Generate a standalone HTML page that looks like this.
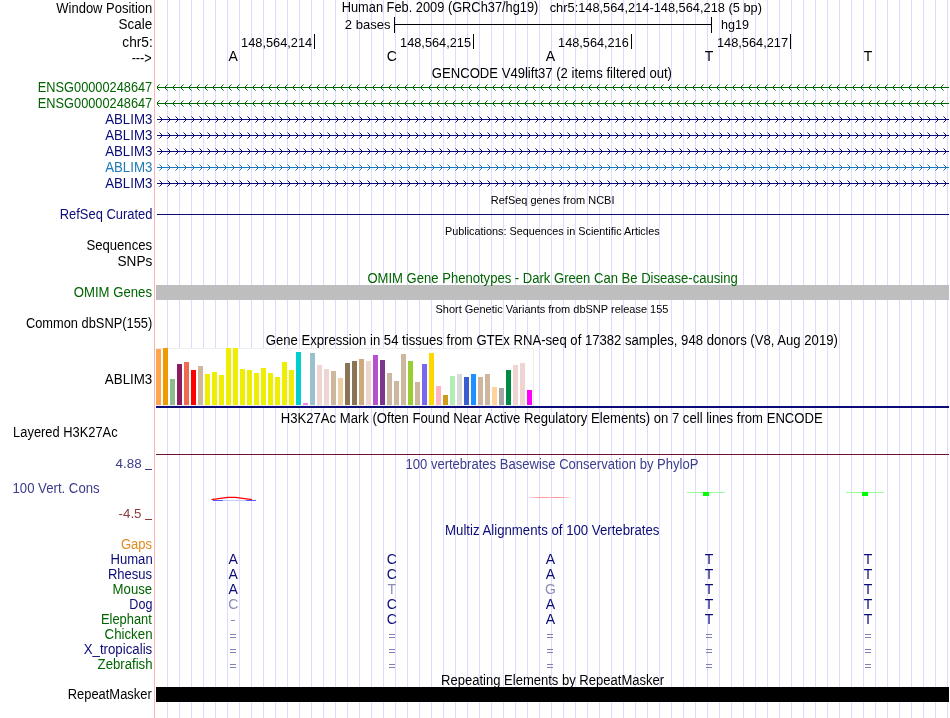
<!DOCTYPE html><html><head><meta charset="utf-8"><style>html,body{margin:0;padding:0;background:#fff;width:950px;height:718px;overflow:hidden}</style></head><body><svg width="950" height="718" viewBox="0 0 950 718" font-family="&quot;Liberation Sans&quot;, sans-serif" style="display:block;will-change:transform">
<defs>
<linearGradient id="lr" x1="0" x2="1" y1="0" y2="0"><stop offset="0" stop-color="#ffeaea"/><stop offset="0.2" stop-color="#ffa0a0"/><stop offset="0.4" stop-color="#ff9898"/><stop offset="0.5" stop-color="#ffb0b0"/><stop offset="0.65" stop-color="#ff9090"/><stop offset="0.8" stop-color="#ffa0a0"/><stop offset="1" stop-color="#ffeeee"/></linearGradient>
</defs>
<rect width="950" height="718" fill="#fff"/>
<path d="M167.5 0V718M179.5 0V718M191.5 0V718M203.5 0V718M215.5 0V718M227.5 0V718M239.5 0V718M251.5 0V718M263.5 0V718M275.5 0V718M287.5 0V718M299.5 0V718M311.5 0V718M323.5 0V718M335.5 0V718M347.5 0V718M359.5 0V718M371.5 0V718M383.5 0V718M395.5 0V718M407.5 0V718M419.5 0V718M431.5 0V718M443.5 0V718M455.5 0V718M467.5 0V718M479.5 0V718M491.5 0V718M503.5 0V718M515.5 0V718M527.5 0V718M539.5 0V718M551.5 0V718M563.5 0V718M575.5 0V718M587.5 0V718M599.5 0V718M611.5 0V718M623.5 0V718M635.5 0V718M647.5 0V718M659.5 0V718M671.5 0V718M683.5 0V718M695.5 0V718M707.5 0V718M719.5 0V718M731.5 0V718M743.5 0V718M755.5 0V718M767.5 0V718M779.5 0V718M791.5 0V718M803.5 0V718M815.5 0V718M827.5 0V718M839.5 0V718M851.5 0V718M863.5 0V718M875.5 0V718M887.5 0V718M899.5 0V718M911.5 0V718M923.5 0V718M935.5 0V718M947.5 0V718" stroke="#dcdcff" stroke-width="1" fill="none"/>
<path d="M154.5 0V718" stroke="#ffb4b4" stroke-width="1"/>
<g fill="#000" shape-rendering="crispEdges">
<rect x="394" y="17" width="1" height="16"/><rect x="711" y="17" width="1" height="16"/><rect x="394" y="24" width="318" height="1"/>
<rect x="314" y="34" width="1" height="15"/>
<rect x="473" y="34" width="1" height="15"/>
<rect x="631" y="34" width="1" height="15"/>
<rect x="790" y="34" width="1" height="15"/>
</g>
<g shape-rendering="crispEdges">
<rect x="157" y="87" width="792" height="1" fill="#006400"/><path d="M157 86h1v3h-1zM158 85h1v1h-1zM158 89h1v1h-1z" fill="#006400"/><path d="M159 84h1v1h-1zM159 90h1v1h-1z" fill="#006400" fill-opacity="0.55"/><path d="M165 86h1v3h-1zM166 85h1v1h-1zM166 89h1v1h-1z" fill="#006400"/><path d="M167 84h1v1h-1zM167 90h1v1h-1z" fill="#006400" fill-opacity="0.55"/><path d="M173 86h1v3h-1zM174 85h1v1h-1zM174 89h1v1h-1z" fill="#006400"/><path d="M175 84h1v1h-1zM175 90h1v1h-1z" fill="#006400" fill-opacity="0.55"/><path d="M181 86h1v3h-1zM182 85h1v1h-1zM182 89h1v1h-1z" fill="#006400"/><path d="M183 84h1v1h-1zM183 90h1v1h-1z" fill="#006400" fill-opacity="0.55"/><path d="M189 86h1v3h-1zM190 85h1v1h-1zM190 89h1v1h-1z" fill="#006400"/><path d="M191 84h1v1h-1zM191 90h1v1h-1z" fill="#006400" fill-opacity="0.55"/><path d="M197 86h1v3h-1zM198 85h1v1h-1zM198 89h1v1h-1z" fill="#006400"/><path d="M199 84h1v1h-1zM199 90h1v1h-1z" fill="#006400" fill-opacity="0.55"/><path d="M205 86h1v3h-1zM206 85h1v1h-1zM206 89h1v1h-1z" fill="#006400"/><path d="M207 84h1v1h-1zM207 90h1v1h-1z" fill="#006400" fill-opacity="0.55"/><path d="M213 86h1v3h-1zM214 85h1v1h-1zM214 89h1v1h-1z" fill="#006400"/><path d="M215 84h1v1h-1zM215 90h1v1h-1z" fill="#006400" fill-opacity="0.55"/><path d="M221 86h1v3h-1zM222 85h1v1h-1zM222 89h1v1h-1z" fill="#006400"/><path d="M223 84h1v1h-1zM223 90h1v1h-1z" fill="#006400" fill-opacity="0.55"/><path d="M229 86h1v3h-1zM230 85h1v1h-1zM230 89h1v1h-1z" fill="#006400"/><path d="M231 84h1v1h-1zM231 90h1v1h-1z" fill="#006400" fill-opacity="0.55"/><path d="M237 86h1v3h-1zM238 85h1v1h-1zM238 89h1v1h-1z" fill="#006400"/><path d="M239 84h1v1h-1zM239 90h1v1h-1z" fill="#006400" fill-opacity="0.55"/><path d="M245 86h1v3h-1zM246 85h1v1h-1zM246 89h1v1h-1z" fill="#006400"/><path d="M247 84h1v1h-1zM247 90h1v1h-1z" fill="#006400" fill-opacity="0.55"/><path d="M253 86h1v3h-1zM254 85h1v1h-1zM254 89h1v1h-1z" fill="#006400"/><path d="M255 84h1v1h-1zM255 90h1v1h-1z" fill="#006400" fill-opacity="0.55"/><path d="M261 86h1v3h-1zM262 85h1v1h-1zM262 89h1v1h-1z" fill="#006400"/><path d="M263 84h1v1h-1zM263 90h1v1h-1z" fill="#006400" fill-opacity="0.55"/><path d="M269 86h1v3h-1zM270 85h1v1h-1zM270 89h1v1h-1z" fill="#006400"/><path d="M271 84h1v1h-1zM271 90h1v1h-1z" fill="#006400" fill-opacity="0.55"/><path d="M277 86h1v3h-1zM278 85h1v1h-1zM278 89h1v1h-1z" fill="#006400"/><path d="M279 84h1v1h-1zM279 90h1v1h-1z" fill="#006400" fill-opacity="0.55"/><path d="M285 86h1v3h-1zM286 85h1v1h-1zM286 89h1v1h-1z" fill="#006400"/><path d="M287 84h1v1h-1zM287 90h1v1h-1z" fill="#006400" fill-opacity="0.55"/><path d="M293 86h1v3h-1zM294 85h1v1h-1zM294 89h1v1h-1z" fill="#006400"/><path d="M295 84h1v1h-1zM295 90h1v1h-1z" fill="#006400" fill-opacity="0.55"/><path d="M301 86h1v3h-1zM302 85h1v1h-1zM302 89h1v1h-1z" fill="#006400"/><path d="M303 84h1v1h-1zM303 90h1v1h-1z" fill="#006400" fill-opacity="0.55"/><path d="M309 86h1v3h-1zM310 85h1v1h-1zM310 89h1v1h-1z" fill="#006400"/><path d="M311 84h1v1h-1zM311 90h1v1h-1z" fill="#006400" fill-opacity="0.55"/><path d="M317 86h1v3h-1zM318 85h1v1h-1zM318 89h1v1h-1z" fill="#006400"/><path d="M319 84h1v1h-1zM319 90h1v1h-1z" fill="#006400" fill-opacity="0.55"/><path d="M325 86h1v3h-1zM326 85h1v1h-1zM326 89h1v1h-1z" fill="#006400"/><path d="M327 84h1v1h-1zM327 90h1v1h-1z" fill="#006400" fill-opacity="0.55"/><path d="M333 86h1v3h-1zM334 85h1v1h-1zM334 89h1v1h-1z" fill="#006400"/><path d="M335 84h1v1h-1zM335 90h1v1h-1z" fill="#006400" fill-opacity="0.55"/><path d="M341 86h1v3h-1zM342 85h1v1h-1zM342 89h1v1h-1z" fill="#006400"/><path d="M343 84h1v1h-1zM343 90h1v1h-1z" fill="#006400" fill-opacity="0.55"/><path d="M349 86h1v3h-1zM350 85h1v1h-1zM350 89h1v1h-1z" fill="#006400"/><path d="M351 84h1v1h-1zM351 90h1v1h-1z" fill="#006400" fill-opacity="0.55"/><path d="M357 86h1v3h-1zM358 85h1v1h-1zM358 89h1v1h-1z" fill="#006400"/><path d="M359 84h1v1h-1zM359 90h1v1h-1z" fill="#006400" fill-opacity="0.55"/><path d="M365 86h1v3h-1zM366 85h1v1h-1zM366 89h1v1h-1z" fill="#006400"/><path d="M367 84h1v1h-1zM367 90h1v1h-1z" fill="#006400" fill-opacity="0.55"/><path d="M373 86h1v3h-1zM374 85h1v1h-1zM374 89h1v1h-1z" fill="#006400"/><path d="M375 84h1v1h-1zM375 90h1v1h-1z" fill="#006400" fill-opacity="0.55"/><path d="M381 86h1v3h-1zM382 85h1v1h-1zM382 89h1v1h-1z" fill="#006400"/><path d="M383 84h1v1h-1zM383 90h1v1h-1z" fill="#006400" fill-opacity="0.55"/><path d="M389 86h1v3h-1zM390 85h1v1h-1zM390 89h1v1h-1z" fill="#006400"/><path d="M391 84h1v1h-1zM391 90h1v1h-1z" fill="#006400" fill-opacity="0.55"/><path d="M397 86h1v3h-1zM398 85h1v1h-1zM398 89h1v1h-1z" fill="#006400"/><path d="M399 84h1v1h-1zM399 90h1v1h-1z" fill="#006400" fill-opacity="0.55"/><path d="M405 86h1v3h-1zM406 85h1v1h-1zM406 89h1v1h-1z" fill="#006400"/><path d="M407 84h1v1h-1zM407 90h1v1h-1z" fill="#006400" fill-opacity="0.55"/><path d="M413 86h1v3h-1zM414 85h1v1h-1zM414 89h1v1h-1z" fill="#006400"/><path d="M415 84h1v1h-1zM415 90h1v1h-1z" fill="#006400" fill-opacity="0.55"/><path d="M421 86h1v3h-1zM422 85h1v1h-1zM422 89h1v1h-1z" fill="#006400"/><path d="M423 84h1v1h-1zM423 90h1v1h-1z" fill="#006400" fill-opacity="0.55"/><path d="M429 86h1v3h-1zM430 85h1v1h-1zM430 89h1v1h-1z" fill="#006400"/><path d="M431 84h1v1h-1zM431 90h1v1h-1z" fill="#006400" fill-opacity="0.55"/><path d="M437 86h1v3h-1zM438 85h1v1h-1zM438 89h1v1h-1z" fill="#006400"/><path d="M439 84h1v1h-1zM439 90h1v1h-1z" fill="#006400" fill-opacity="0.55"/><path d="M445 86h1v3h-1zM446 85h1v1h-1zM446 89h1v1h-1z" fill="#006400"/><path d="M447 84h1v1h-1zM447 90h1v1h-1z" fill="#006400" fill-opacity="0.55"/><path d="M453 86h1v3h-1zM454 85h1v1h-1zM454 89h1v1h-1z" fill="#006400"/><path d="M455 84h1v1h-1zM455 90h1v1h-1z" fill="#006400" fill-opacity="0.55"/><path d="M461 86h1v3h-1zM462 85h1v1h-1zM462 89h1v1h-1z" fill="#006400"/><path d="M463 84h1v1h-1zM463 90h1v1h-1z" fill="#006400" fill-opacity="0.55"/><path d="M469 86h1v3h-1zM470 85h1v1h-1zM470 89h1v1h-1z" fill="#006400"/><path d="M471 84h1v1h-1zM471 90h1v1h-1z" fill="#006400" fill-opacity="0.55"/><path d="M477 86h1v3h-1zM478 85h1v1h-1zM478 89h1v1h-1z" fill="#006400"/><path d="M479 84h1v1h-1zM479 90h1v1h-1z" fill="#006400" fill-opacity="0.55"/><path d="M485 86h1v3h-1zM486 85h1v1h-1zM486 89h1v1h-1z" fill="#006400"/><path d="M487 84h1v1h-1zM487 90h1v1h-1z" fill="#006400" fill-opacity="0.55"/><path d="M493 86h1v3h-1zM494 85h1v1h-1zM494 89h1v1h-1z" fill="#006400"/><path d="M495 84h1v1h-1zM495 90h1v1h-1z" fill="#006400" fill-opacity="0.55"/><path d="M501 86h1v3h-1zM502 85h1v1h-1zM502 89h1v1h-1z" fill="#006400"/><path d="M503 84h1v1h-1zM503 90h1v1h-1z" fill="#006400" fill-opacity="0.55"/><path d="M509 86h1v3h-1zM510 85h1v1h-1zM510 89h1v1h-1z" fill="#006400"/><path d="M511 84h1v1h-1zM511 90h1v1h-1z" fill="#006400" fill-opacity="0.55"/><path d="M517 86h1v3h-1zM518 85h1v1h-1zM518 89h1v1h-1z" fill="#006400"/><path d="M519 84h1v1h-1zM519 90h1v1h-1z" fill="#006400" fill-opacity="0.55"/><path d="M525 86h1v3h-1zM526 85h1v1h-1zM526 89h1v1h-1z" fill="#006400"/><path d="M527 84h1v1h-1zM527 90h1v1h-1z" fill="#006400" fill-opacity="0.55"/><path d="M533 86h1v3h-1zM534 85h1v1h-1zM534 89h1v1h-1z" fill="#006400"/><path d="M535 84h1v1h-1zM535 90h1v1h-1z" fill="#006400" fill-opacity="0.55"/><path d="M541 86h1v3h-1zM542 85h1v1h-1zM542 89h1v1h-1z" fill="#006400"/><path d="M543 84h1v1h-1zM543 90h1v1h-1z" fill="#006400" fill-opacity="0.55"/><path d="M549 86h1v3h-1zM550 85h1v1h-1zM550 89h1v1h-1z" fill="#006400"/><path d="M551 84h1v1h-1zM551 90h1v1h-1z" fill="#006400" fill-opacity="0.55"/><path d="M557 86h1v3h-1zM558 85h1v1h-1zM558 89h1v1h-1z" fill="#006400"/><path d="M559 84h1v1h-1zM559 90h1v1h-1z" fill="#006400" fill-opacity="0.55"/><path d="M565 86h1v3h-1zM566 85h1v1h-1zM566 89h1v1h-1z" fill="#006400"/><path d="M567 84h1v1h-1zM567 90h1v1h-1z" fill="#006400" fill-opacity="0.55"/><path d="M573 86h1v3h-1zM574 85h1v1h-1zM574 89h1v1h-1z" fill="#006400"/><path d="M575 84h1v1h-1zM575 90h1v1h-1z" fill="#006400" fill-opacity="0.55"/><path d="M581 86h1v3h-1zM582 85h1v1h-1zM582 89h1v1h-1z" fill="#006400"/><path d="M583 84h1v1h-1zM583 90h1v1h-1z" fill="#006400" fill-opacity="0.55"/><path d="M589 86h1v3h-1zM590 85h1v1h-1zM590 89h1v1h-1z" fill="#006400"/><path d="M591 84h1v1h-1zM591 90h1v1h-1z" fill="#006400" fill-opacity="0.55"/><path d="M597 86h1v3h-1zM598 85h1v1h-1zM598 89h1v1h-1z" fill="#006400"/><path d="M599 84h1v1h-1zM599 90h1v1h-1z" fill="#006400" fill-opacity="0.55"/><path d="M605 86h1v3h-1zM606 85h1v1h-1zM606 89h1v1h-1z" fill="#006400"/><path d="M607 84h1v1h-1zM607 90h1v1h-1z" fill="#006400" fill-opacity="0.55"/><path d="M613 86h1v3h-1zM614 85h1v1h-1zM614 89h1v1h-1z" fill="#006400"/><path d="M615 84h1v1h-1zM615 90h1v1h-1z" fill="#006400" fill-opacity="0.55"/><path d="M621 86h1v3h-1zM622 85h1v1h-1zM622 89h1v1h-1z" fill="#006400"/><path d="M623 84h1v1h-1zM623 90h1v1h-1z" fill="#006400" fill-opacity="0.55"/><path d="M629 86h1v3h-1zM630 85h1v1h-1zM630 89h1v1h-1z" fill="#006400"/><path d="M631 84h1v1h-1zM631 90h1v1h-1z" fill="#006400" fill-opacity="0.55"/><path d="M637 86h1v3h-1zM638 85h1v1h-1zM638 89h1v1h-1z" fill="#006400"/><path d="M639 84h1v1h-1zM639 90h1v1h-1z" fill="#006400" fill-opacity="0.55"/><path d="M645 86h1v3h-1zM646 85h1v1h-1zM646 89h1v1h-1z" fill="#006400"/><path d="M647 84h1v1h-1zM647 90h1v1h-1z" fill="#006400" fill-opacity="0.55"/><path d="M653 86h1v3h-1zM654 85h1v1h-1zM654 89h1v1h-1z" fill="#006400"/><path d="M655 84h1v1h-1zM655 90h1v1h-1z" fill="#006400" fill-opacity="0.55"/><path d="M661 86h1v3h-1zM662 85h1v1h-1zM662 89h1v1h-1z" fill="#006400"/><path d="M663 84h1v1h-1zM663 90h1v1h-1z" fill="#006400" fill-opacity="0.55"/><path d="M669 86h1v3h-1zM670 85h1v1h-1zM670 89h1v1h-1z" fill="#006400"/><path d="M671 84h1v1h-1zM671 90h1v1h-1z" fill="#006400" fill-opacity="0.55"/><path d="M677 86h1v3h-1zM678 85h1v1h-1zM678 89h1v1h-1z" fill="#006400"/><path d="M679 84h1v1h-1zM679 90h1v1h-1z" fill="#006400" fill-opacity="0.55"/><path d="M685 86h1v3h-1zM686 85h1v1h-1zM686 89h1v1h-1z" fill="#006400"/><path d="M687 84h1v1h-1zM687 90h1v1h-1z" fill="#006400" fill-opacity="0.55"/><path d="M693 86h1v3h-1zM694 85h1v1h-1zM694 89h1v1h-1z" fill="#006400"/><path d="M695 84h1v1h-1zM695 90h1v1h-1z" fill="#006400" fill-opacity="0.55"/><path d="M701 86h1v3h-1zM702 85h1v1h-1zM702 89h1v1h-1z" fill="#006400"/><path d="M703 84h1v1h-1zM703 90h1v1h-1z" fill="#006400" fill-opacity="0.55"/><path d="M709 86h1v3h-1zM710 85h1v1h-1zM710 89h1v1h-1z" fill="#006400"/><path d="M711 84h1v1h-1zM711 90h1v1h-1z" fill="#006400" fill-opacity="0.55"/><path d="M717 86h1v3h-1zM718 85h1v1h-1zM718 89h1v1h-1z" fill="#006400"/><path d="M719 84h1v1h-1zM719 90h1v1h-1z" fill="#006400" fill-opacity="0.55"/><path d="M725 86h1v3h-1zM726 85h1v1h-1zM726 89h1v1h-1z" fill="#006400"/><path d="M727 84h1v1h-1zM727 90h1v1h-1z" fill="#006400" fill-opacity="0.55"/><path d="M733 86h1v3h-1zM734 85h1v1h-1zM734 89h1v1h-1z" fill="#006400"/><path d="M735 84h1v1h-1zM735 90h1v1h-1z" fill="#006400" fill-opacity="0.55"/><path d="M741 86h1v3h-1zM742 85h1v1h-1zM742 89h1v1h-1z" fill="#006400"/><path d="M743 84h1v1h-1zM743 90h1v1h-1z" fill="#006400" fill-opacity="0.55"/><path d="M749 86h1v3h-1zM750 85h1v1h-1zM750 89h1v1h-1z" fill="#006400"/><path d="M751 84h1v1h-1zM751 90h1v1h-1z" fill="#006400" fill-opacity="0.55"/><path d="M757 86h1v3h-1zM758 85h1v1h-1zM758 89h1v1h-1z" fill="#006400"/><path d="M759 84h1v1h-1zM759 90h1v1h-1z" fill="#006400" fill-opacity="0.55"/><path d="M765 86h1v3h-1zM766 85h1v1h-1zM766 89h1v1h-1z" fill="#006400"/><path d="M767 84h1v1h-1zM767 90h1v1h-1z" fill="#006400" fill-opacity="0.55"/><path d="M773 86h1v3h-1zM774 85h1v1h-1zM774 89h1v1h-1z" fill="#006400"/><path d="M775 84h1v1h-1zM775 90h1v1h-1z" fill="#006400" fill-opacity="0.55"/><path d="M781 86h1v3h-1zM782 85h1v1h-1zM782 89h1v1h-1z" fill="#006400"/><path d="M783 84h1v1h-1zM783 90h1v1h-1z" fill="#006400" fill-opacity="0.55"/><path d="M789 86h1v3h-1zM790 85h1v1h-1zM790 89h1v1h-1z" fill="#006400"/><path d="M791 84h1v1h-1zM791 90h1v1h-1z" fill="#006400" fill-opacity="0.55"/><path d="M797 86h1v3h-1zM798 85h1v1h-1zM798 89h1v1h-1z" fill="#006400"/><path d="M799 84h1v1h-1zM799 90h1v1h-1z" fill="#006400" fill-opacity="0.55"/><path d="M805 86h1v3h-1zM806 85h1v1h-1zM806 89h1v1h-1z" fill="#006400"/><path d="M807 84h1v1h-1zM807 90h1v1h-1z" fill="#006400" fill-opacity="0.55"/><path d="M813 86h1v3h-1zM814 85h1v1h-1zM814 89h1v1h-1z" fill="#006400"/><path d="M815 84h1v1h-1zM815 90h1v1h-1z" fill="#006400" fill-opacity="0.55"/><path d="M821 86h1v3h-1zM822 85h1v1h-1zM822 89h1v1h-1z" fill="#006400"/><path d="M823 84h1v1h-1zM823 90h1v1h-1z" fill="#006400" fill-opacity="0.55"/><path d="M829 86h1v3h-1zM830 85h1v1h-1zM830 89h1v1h-1z" fill="#006400"/><path d="M831 84h1v1h-1zM831 90h1v1h-1z" fill="#006400" fill-opacity="0.55"/><path d="M837 86h1v3h-1zM838 85h1v1h-1zM838 89h1v1h-1z" fill="#006400"/><path d="M839 84h1v1h-1zM839 90h1v1h-1z" fill="#006400" fill-opacity="0.55"/><path d="M845 86h1v3h-1zM846 85h1v1h-1zM846 89h1v1h-1z" fill="#006400"/><path d="M847 84h1v1h-1zM847 90h1v1h-1z" fill="#006400" fill-opacity="0.55"/><path d="M853 86h1v3h-1zM854 85h1v1h-1zM854 89h1v1h-1z" fill="#006400"/><path d="M855 84h1v1h-1zM855 90h1v1h-1z" fill="#006400" fill-opacity="0.55"/><path d="M861 86h1v3h-1zM862 85h1v1h-1zM862 89h1v1h-1z" fill="#006400"/><path d="M863 84h1v1h-1zM863 90h1v1h-1z" fill="#006400" fill-opacity="0.55"/><path d="M869 86h1v3h-1zM870 85h1v1h-1zM870 89h1v1h-1z" fill="#006400"/><path d="M871 84h1v1h-1zM871 90h1v1h-1z" fill="#006400" fill-opacity="0.55"/><path d="M877 86h1v3h-1zM878 85h1v1h-1zM878 89h1v1h-1z" fill="#006400"/><path d="M879 84h1v1h-1zM879 90h1v1h-1z" fill="#006400" fill-opacity="0.55"/><path d="M885 86h1v3h-1zM886 85h1v1h-1zM886 89h1v1h-1z" fill="#006400"/><path d="M887 84h1v1h-1zM887 90h1v1h-1z" fill="#006400" fill-opacity="0.55"/><path d="M893 86h1v3h-1zM894 85h1v1h-1zM894 89h1v1h-1z" fill="#006400"/><path d="M895 84h1v1h-1zM895 90h1v1h-1z" fill="#006400" fill-opacity="0.55"/><path d="M901 86h1v3h-1zM902 85h1v1h-1zM902 89h1v1h-1z" fill="#006400"/><path d="M903 84h1v1h-1zM903 90h1v1h-1z" fill="#006400" fill-opacity="0.55"/><path d="M909 86h1v3h-1zM910 85h1v1h-1zM910 89h1v1h-1z" fill="#006400"/><path d="M911 84h1v1h-1zM911 90h1v1h-1z" fill="#006400" fill-opacity="0.55"/><path d="M917 86h1v3h-1zM918 85h1v1h-1zM918 89h1v1h-1z" fill="#006400"/><path d="M919 84h1v1h-1zM919 90h1v1h-1z" fill="#006400" fill-opacity="0.55"/><path d="M925 86h1v3h-1zM926 85h1v1h-1zM926 89h1v1h-1z" fill="#006400"/><path d="M927 84h1v1h-1zM927 90h1v1h-1z" fill="#006400" fill-opacity="0.55"/><path d="M933 86h1v3h-1zM934 85h1v1h-1zM934 89h1v1h-1z" fill="#006400"/><path d="M935 84h1v1h-1zM935 90h1v1h-1z" fill="#006400" fill-opacity="0.55"/><path d="M941 86h1v3h-1zM942 85h1v1h-1zM942 89h1v1h-1z" fill="#006400"/><path d="M943 84h1v1h-1zM943 90h1v1h-1z" fill="#006400" fill-opacity="0.55"/>
<rect x="157" y="103" width="792" height="1" fill="#006400"/><path d="M157 102h1v3h-1zM158 101h1v1h-1zM158 105h1v1h-1z" fill="#006400"/><path d="M159 100h1v1h-1zM159 106h1v1h-1z" fill="#006400" fill-opacity="0.55"/><path d="M165 102h1v3h-1zM166 101h1v1h-1zM166 105h1v1h-1z" fill="#006400"/><path d="M167 100h1v1h-1zM167 106h1v1h-1z" fill="#006400" fill-opacity="0.55"/><path d="M173 102h1v3h-1zM174 101h1v1h-1zM174 105h1v1h-1z" fill="#006400"/><path d="M175 100h1v1h-1zM175 106h1v1h-1z" fill="#006400" fill-opacity="0.55"/><path d="M181 102h1v3h-1zM182 101h1v1h-1zM182 105h1v1h-1z" fill="#006400"/><path d="M183 100h1v1h-1zM183 106h1v1h-1z" fill="#006400" fill-opacity="0.55"/><path d="M189 102h1v3h-1zM190 101h1v1h-1zM190 105h1v1h-1z" fill="#006400"/><path d="M191 100h1v1h-1zM191 106h1v1h-1z" fill="#006400" fill-opacity="0.55"/><path d="M197 102h1v3h-1zM198 101h1v1h-1zM198 105h1v1h-1z" fill="#006400"/><path d="M199 100h1v1h-1zM199 106h1v1h-1z" fill="#006400" fill-opacity="0.55"/><path d="M205 102h1v3h-1zM206 101h1v1h-1zM206 105h1v1h-1z" fill="#006400"/><path d="M207 100h1v1h-1zM207 106h1v1h-1z" fill="#006400" fill-opacity="0.55"/><path d="M213 102h1v3h-1zM214 101h1v1h-1zM214 105h1v1h-1z" fill="#006400"/><path d="M215 100h1v1h-1zM215 106h1v1h-1z" fill="#006400" fill-opacity="0.55"/><path d="M221 102h1v3h-1zM222 101h1v1h-1zM222 105h1v1h-1z" fill="#006400"/><path d="M223 100h1v1h-1zM223 106h1v1h-1z" fill="#006400" fill-opacity="0.55"/><path d="M229 102h1v3h-1zM230 101h1v1h-1zM230 105h1v1h-1z" fill="#006400"/><path d="M231 100h1v1h-1zM231 106h1v1h-1z" fill="#006400" fill-opacity="0.55"/><path d="M237 102h1v3h-1zM238 101h1v1h-1zM238 105h1v1h-1z" fill="#006400"/><path d="M239 100h1v1h-1zM239 106h1v1h-1z" fill="#006400" fill-opacity="0.55"/><path d="M245 102h1v3h-1zM246 101h1v1h-1zM246 105h1v1h-1z" fill="#006400"/><path d="M247 100h1v1h-1zM247 106h1v1h-1z" fill="#006400" fill-opacity="0.55"/><path d="M253 102h1v3h-1zM254 101h1v1h-1zM254 105h1v1h-1z" fill="#006400"/><path d="M255 100h1v1h-1zM255 106h1v1h-1z" fill="#006400" fill-opacity="0.55"/><path d="M261 102h1v3h-1zM262 101h1v1h-1zM262 105h1v1h-1z" fill="#006400"/><path d="M263 100h1v1h-1zM263 106h1v1h-1z" fill="#006400" fill-opacity="0.55"/><path d="M269 102h1v3h-1zM270 101h1v1h-1zM270 105h1v1h-1z" fill="#006400"/><path d="M271 100h1v1h-1zM271 106h1v1h-1z" fill="#006400" fill-opacity="0.55"/><path d="M277 102h1v3h-1zM278 101h1v1h-1zM278 105h1v1h-1z" fill="#006400"/><path d="M279 100h1v1h-1zM279 106h1v1h-1z" fill="#006400" fill-opacity="0.55"/><path d="M285 102h1v3h-1zM286 101h1v1h-1zM286 105h1v1h-1z" fill="#006400"/><path d="M287 100h1v1h-1zM287 106h1v1h-1z" fill="#006400" fill-opacity="0.55"/><path d="M293 102h1v3h-1zM294 101h1v1h-1zM294 105h1v1h-1z" fill="#006400"/><path d="M295 100h1v1h-1zM295 106h1v1h-1z" fill="#006400" fill-opacity="0.55"/><path d="M301 102h1v3h-1zM302 101h1v1h-1zM302 105h1v1h-1z" fill="#006400"/><path d="M303 100h1v1h-1zM303 106h1v1h-1z" fill="#006400" fill-opacity="0.55"/><path d="M309 102h1v3h-1zM310 101h1v1h-1zM310 105h1v1h-1z" fill="#006400"/><path d="M311 100h1v1h-1zM311 106h1v1h-1z" fill="#006400" fill-opacity="0.55"/><path d="M317 102h1v3h-1zM318 101h1v1h-1zM318 105h1v1h-1z" fill="#006400"/><path d="M319 100h1v1h-1zM319 106h1v1h-1z" fill="#006400" fill-opacity="0.55"/><path d="M325 102h1v3h-1zM326 101h1v1h-1zM326 105h1v1h-1z" fill="#006400"/><path d="M327 100h1v1h-1zM327 106h1v1h-1z" fill="#006400" fill-opacity="0.55"/><path d="M333 102h1v3h-1zM334 101h1v1h-1zM334 105h1v1h-1z" fill="#006400"/><path d="M335 100h1v1h-1zM335 106h1v1h-1z" fill="#006400" fill-opacity="0.55"/><path d="M341 102h1v3h-1zM342 101h1v1h-1zM342 105h1v1h-1z" fill="#006400"/><path d="M343 100h1v1h-1zM343 106h1v1h-1z" fill="#006400" fill-opacity="0.55"/><path d="M349 102h1v3h-1zM350 101h1v1h-1zM350 105h1v1h-1z" fill="#006400"/><path d="M351 100h1v1h-1zM351 106h1v1h-1z" fill="#006400" fill-opacity="0.55"/><path d="M357 102h1v3h-1zM358 101h1v1h-1zM358 105h1v1h-1z" fill="#006400"/><path d="M359 100h1v1h-1zM359 106h1v1h-1z" fill="#006400" fill-opacity="0.55"/><path d="M365 102h1v3h-1zM366 101h1v1h-1zM366 105h1v1h-1z" fill="#006400"/><path d="M367 100h1v1h-1zM367 106h1v1h-1z" fill="#006400" fill-opacity="0.55"/><path d="M373 102h1v3h-1zM374 101h1v1h-1zM374 105h1v1h-1z" fill="#006400"/><path d="M375 100h1v1h-1zM375 106h1v1h-1z" fill="#006400" fill-opacity="0.55"/><path d="M381 102h1v3h-1zM382 101h1v1h-1zM382 105h1v1h-1z" fill="#006400"/><path d="M383 100h1v1h-1zM383 106h1v1h-1z" fill="#006400" fill-opacity="0.55"/><path d="M389 102h1v3h-1zM390 101h1v1h-1zM390 105h1v1h-1z" fill="#006400"/><path d="M391 100h1v1h-1zM391 106h1v1h-1z" fill="#006400" fill-opacity="0.55"/><path d="M397 102h1v3h-1zM398 101h1v1h-1zM398 105h1v1h-1z" fill="#006400"/><path d="M399 100h1v1h-1zM399 106h1v1h-1z" fill="#006400" fill-opacity="0.55"/><path d="M405 102h1v3h-1zM406 101h1v1h-1zM406 105h1v1h-1z" fill="#006400"/><path d="M407 100h1v1h-1zM407 106h1v1h-1z" fill="#006400" fill-opacity="0.55"/><path d="M413 102h1v3h-1zM414 101h1v1h-1zM414 105h1v1h-1z" fill="#006400"/><path d="M415 100h1v1h-1zM415 106h1v1h-1z" fill="#006400" fill-opacity="0.55"/><path d="M421 102h1v3h-1zM422 101h1v1h-1zM422 105h1v1h-1z" fill="#006400"/><path d="M423 100h1v1h-1zM423 106h1v1h-1z" fill="#006400" fill-opacity="0.55"/><path d="M429 102h1v3h-1zM430 101h1v1h-1zM430 105h1v1h-1z" fill="#006400"/><path d="M431 100h1v1h-1zM431 106h1v1h-1z" fill="#006400" fill-opacity="0.55"/><path d="M437 102h1v3h-1zM438 101h1v1h-1zM438 105h1v1h-1z" fill="#006400"/><path d="M439 100h1v1h-1zM439 106h1v1h-1z" fill="#006400" fill-opacity="0.55"/><path d="M445 102h1v3h-1zM446 101h1v1h-1zM446 105h1v1h-1z" fill="#006400"/><path d="M447 100h1v1h-1zM447 106h1v1h-1z" fill="#006400" fill-opacity="0.55"/><path d="M453 102h1v3h-1zM454 101h1v1h-1zM454 105h1v1h-1z" fill="#006400"/><path d="M455 100h1v1h-1zM455 106h1v1h-1z" fill="#006400" fill-opacity="0.55"/><path d="M461 102h1v3h-1zM462 101h1v1h-1zM462 105h1v1h-1z" fill="#006400"/><path d="M463 100h1v1h-1zM463 106h1v1h-1z" fill="#006400" fill-opacity="0.55"/><path d="M469 102h1v3h-1zM470 101h1v1h-1zM470 105h1v1h-1z" fill="#006400"/><path d="M471 100h1v1h-1zM471 106h1v1h-1z" fill="#006400" fill-opacity="0.55"/><path d="M477 102h1v3h-1zM478 101h1v1h-1zM478 105h1v1h-1z" fill="#006400"/><path d="M479 100h1v1h-1zM479 106h1v1h-1z" fill="#006400" fill-opacity="0.55"/><path d="M485 102h1v3h-1zM486 101h1v1h-1zM486 105h1v1h-1z" fill="#006400"/><path d="M487 100h1v1h-1zM487 106h1v1h-1z" fill="#006400" fill-opacity="0.55"/><path d="M493 102h1v3h-1zM494 101h1v1h-1zM494 105h1v1h-1z" fill="#006400"/><path d="M495 100h1v1h-1zM495 106h1v1h-1z" fill="#006400" fill-opacity="0.55"/><path d="M501 102h1v3h-1zM502 101h1v1h-1zM502 105h1v1h-1z" fill="#006400"/><path d="M503 100h1v1h-1zM503 106h1v1h-1z" fill="#006400" fill-opacity="0.55"/><path d="M509 102h1v3h-1zM510 101h1v1h-1zM510 105h1v1h-1z" fill="#006400"/><path d="M511 100h1v1h-1zM511 106h1v1h-1z" fill="#006400" fill-opacity="0.55"/><path d="M517 102h1v3h-1zM518 101h1v1h-1zM518 105h1v1h-1z" fill="#006400"/><path d="M519 100h1v1h-1zM519 106h1v1h-1z" fill="#006400" fill-opacity="0.55"/><path d="M525 102h1v3h-1zM526 101h1v1h-1zM526 105h1v1h-1z" fill="#006400"/><path d="M527 100h1v1h-1zM527 106h1v1h-1z" fill="#006400" fill-opacity="0.55"/><path d="M533 102h1v3h-1zM534 101h1v1h-1zM534 105h1v1h-1z" fill="#006400"/><path d="M535 100h1v1h-1zM535 106h1v1h-1z" fill="#006400" fill-opacity="0.55"/><path d="M541 102h1v3h-1zM542 101h1v1h-1zM542 105h1v1h-1z" fill="#006400"/><path d="M543 100h1v1h-1zM543 106h1v1h-1z" fill="#006400" fill-opacity="0.55"/><path d="M549 102h1v3h-1zM550 101h1v1h-1zM550 105h1v1h-1z" fill="#006400"/><path d="M551 100h1v1h-1zM551 106h1v1h-1z" fill="#006400" fill-opacity="0.55"/><path d="M557 102h1v3h-1zM558 101h1v1h-1zM558 105h1v1h-1z" fill="#006400"/><path d="M559 100h1v1h-1zM559 106h1v1h-1z" fill="#006400" fill-opacity="0.55"/><path d="M565 102h1v3h-1zM566 101h1v1h-1zM566 105h1v1h-1z" fill="#006400"/><path d="M567 100h1v1h-1zM567 106h1v1h-1z" fill="#006400" fill-opacity="0.55"/><path d="M573 102h1v3h-1zM574 101h1v1h-1zM574 105h1v1h-1z" fill="#006400"/><path d="M575 100h1v1h-1zM575 106h1v1h-1z" fill="#006400" fill-opacity="0.55"/><path d="M581 102h1v3h-1zM582 101h1v1h-1zM582 105h1v1h-1z" fill="#006400"/><path d="M583 100h1v1h-1zM583 106h1v1h-1z" fill="#006400" fill-opacity="0.55"/><path d="M589 102h1v3h-1zM590 101h1v1h-1zM590 105h1v1h-1z" fill="#006400"/><path d="M591 100h1v1h-1zM591 106h1v1h-1z" fill="#006400" fill-opacity="0.55"/><path d="M597 102h1v3h-1zM598 101h1v1h-1zM598 105h1v1h-1z" fill="#006400"/><path d="M599 100h1v1h-1zM599 106h1v1h-1z" fill="#006400" fill-opacity="0.55"/><path d="M605 102h1v3h-1zM606 101h1v1h-1zM606 105h1v1h-1z" fill="#006400"/><path d="M607 100h1v1h-1zM607 106h1v1h-1z" fill="#006400" fill-opacity="0.55"/><path d="M613 102h1v3h-1zM614 101h1v1h-1zM614 105h1v1h-1z" fill="#006400"/><path d="M615 100h1v1h-1zM615 106h1v1h-1z" fill="#006400" fill-opacity="0.55"/><path d="M621 102h1v3h-1zM622 101h1v1h-1zM622 105h1v1h-1z" fill="#006400"/><path d="M623 100h1v1h-1zM623 106h1v1h-1z" fill="#006400" fill-opacity="0.55"/><path d="M629 102h1v3h-1zM630 101h1v1h-1zM630 105h1v1h-1z" fill="#006400"/><path d="M631 100h1v1h-1zM631 106h1v1h-1z" fill="#006400" fill-opacity="0.55"/><path d="M637 102h1v3h-1zM638 101h1v1h-1zM638 105h1v1h-1z" fill="#006400"/><path d="M639 100h1v1h-1zM639 106h1v1h-1z" fill="#006400" fill-opacity="0.55"/><path d="M645 102h1v3h-1zM646 101h1v1h-1zM646 105h1v1h-1z" fill="#006400"/><path d="M647 100h1v1h-1zM647 106h1v1h-1z" fill="#006400" fill-opacity="0.55"/><path d="M653 102h1v3h-1zM654 101h1v1h-1zM654 105h1v1h-1z" fill="#006400"/><path d="M655 100h1v1h-1zM655 106h1v1h-1z" fill="#006400" fill-opacity="0.55"/><path d="M661 102h1v3h-1zM662 101h1v1h-1zM662 105h1v1h-1z" fill="#006400"/><path d="M663 100h1v1h-1zM663 106h1v1h-1z" fill="#006400" fill-opacity="0.55"/><path d="M669 102h1v3h-1zM670 101h1v1h-1zM670 105h1v1h-1z" fill="#006400"/><path d="M671 100h1v1h-1zM671 106h1v1h-1z" fill="#006400" fill-opacity="0.55"/><path d="M677 102h1v3h-1zM678 101h1v1h-1zM678 105h1v1h-1z" fill="#006400"/><path d="M679 100h1v1h-1zM679 106h1v1h-1z" fill="#006400" fill-opacity="0.55"/><path d="M685 102h1v3h-1zM686 101h1v1h-1zM686 105h1v1h-1z" fill="#006400"/><path d="M687 100h1v1h-1zM687 106h1v1h-1z" fill="#006400" fill-opacity="0.55"/><path d="M693 102h1v3h-1zM694 101h1v1h-1zM694 105h1v1h-1z" fill="#006400"/><path d="M695 100h1v1h-1zM695 106h1v1h-1z" fill="#006400" fill-opacity="0.55"/><path d="M701 102h1v3h-1zM702 101h1v1h-1zM702 105h1v1h-1z" fill="#006400"/><path d="M703 100h1v1h-1zM703 106h1v1h-1z" fill="#006400" fill-opacity="0.55"/><path d="M709 102h1v3h-1zM710 101h1v1h-1zM710 105h1v1h-1z" fill="#006400"/><path d="M711 100h1v1h-1zM711 106h1v1h-1z" fill="#006400" fill-opacity="0.55"/><path d="M717 102h1v3h-1zM718 101h1v1h-1zM718 105h1v1h-1z" fill="#006400"/><path d="M719 100h1v1h-1zM719 106h1v1h-1z" fill="#006400" fill-opacity="0.55"/><path d="M725 102h1v3h-1zM726 101h1v1h-1zM726 105h1v1h-1z" fill="#006400"/><path d="M727 100h1v1h-1zM727 106h1v1h-1z" fill="#006400" fill-opacity="0.55"/><path d="M733 102h1v3h-1zM734 101h1v1h-1zM734 105h1v1h-1z" fill="#006400"/><path d="M735 100h1v1h-1zM735 106h1v1h-1z" fill="#006400" fill-opacity="0.55"/><path d="M741 102h1v3h-1zM742 101h1v1h-1zM742 105h1v1h-1z" fill="#006400"/><path d="M743 100h1v1h-1zM743 106h1v1h-1z" fill="#006400" fill-opacity="0.55"/><path d="M749 102h1v3h-1zM750 101h1v1h-1zM750 105h1v1h-1z" fill="#006400"/><path d="M751 100h1v1h-1zM751 106h1v1h-1z" fill="#006400" fill-opacity="0.55"/><path d="M757 102h1v3h-1zM758 101h1v1h-1zM758 105h1v1h-1z" fill="#006400"/><path d="M759 100h1v1h-1zM759 106h1v1h-1z" fill="#006400" fill-opacity="0.55"/><path d="M765 102h1v3h-1zM766 101h1v1h-1zM766 105h1v1h-1z" fill="#006400"/><path d="M767 100h1v1h-1zM767 106h1v1h-1z" fill="#006400" fill-opacity="0.55"/><path d="M773 102h1v3h-1zM774 101h1v1h-1zM774 105h1v1h-1z" fill="#006400"/><path d="M775 100h1v1h-1zM775 106h1v1h-1z" fill="#006400" fill-opacity="0.55"/><path d="M781 102h1v3h-1zM782 101h1v1h-1zM782 105h1v1h-1z" fill="#006400"/><path d="M783 100h1v1h-1zM783 106h1v1h-1z" fill="#006400" fill-opacity="0.55"/><path d="M789 102h1v3h-1zM790 101h1v1h-1zM790 105h1v1h-1z" fill="#006400"/><path d="M791 100h1v1h-1zM791 106h1v1h-1z" fill="#006400" fill-opacity="0.55"/><path d="M797 102h1v3h-1zM798 101h1v1h-1zM798 105h1v1h-1z" fill="#006400"/><path d="M799 100h1v1h-1zM799 106h1v1h-1z" fill="#006400" fill-opacity="0.55"/><path d="M805 102h1v3h-1zM806 101h1v1h-1zM806 105h1v1h-1z" fill="#006400"/><path d="M807 100h1v1h-1zM807 106h1v1h-1z" fill="#006400" fill-opacity="0.55"/><path d="M813 102h1v3h-1zM814 101h1v1h-1zM814 105h1v1h-1z" fill="#006400"/><path d="M815 100h1v1h-1zM815 106h1v1h-1z" fill="#006400" fill-opacity="0.55"/><path d="M821 102h1v3h-1zM822 101h1v1h-1zM822 105h1v1h-1z" fill="#006400"/><path d="M823 100h1v1h-1zM823 106h1v1h-1z" fill="#006400" fill-opacity="0.55"/><path d="M829 102h1v3h-1zM830 101h1v1h-1zM830 105h1v1h-1z" fill="#006400"/><path d="M831 100h1v1h-1zM831 106h1v1h-1z" fill="#006400" fill-opacity="0.55"/><path d="M837 102h1v3h-1zM838 101h1v1h-1zM838 105h1v1h-1z" fill="#006400"/><path d="M839 100h1v1h-1zM839 106h1v1h-1z" fill="#006400" fill-opacity="0.55"/><path d="M845 102h1v3h-1zM846 101h1v1h-1zM846 105h1v1h-1z" fill="#006400"/><path d="M847 100h1v1h-1zM847 106h1v1h-1z" fill="#006400" fill-opacity="0.55"/><path d="M853 102h1v3h-1zM854 101h1v1h-1zM854 105h1v1h-1z" fill="#006400"/><path d="M855 100h1v1h-1zM855 106h1v1h-1z" fill="#006400" fill-opacity="0.55"/><path d="M861 102h1v3h-1zM862 101h1v1h-1zM862 105h1v1h-1z" fill="#006400"/><path d="M863 100h1v1h-1zM863 106h1v1h-1z" fill="#006400" fill-opacity="0.55"/><path d="M869 102h1v3h-1zM870 101h1v1h-1zM870 105h1v1h-1z" fill="#006400"/><path d="M871 100h1v1h-1zM871 106h1v1h-1z" fill="#006400" fill-opacity="0.55"/><path d="M877 102h1v3h-1zM878 101h1v1h-1zM878 105h1v1h-1z" fill="#006400"/><path d="M879 100h1v1h-1zM879 106h1v1h-1z" fill="#006400" fill-opacity="0.55"/><path d="M885 102h1v3h-1zM886 101h1v1h-1zM886 105h1v1h-1z" fill="#006400"/><path d="M887 100h1v1h-1zM887 106h1v1h-1z" fill="#006400" fill-opacity="0.55"/><path d="M893 102h1v3h-1zM894 101h1v1h-1zM894 105h1v1h-1z" fill="#006400"/><path d="M895 100h1v1h-1zM895 106h1v1h-1z" fill="#006400" fill-opacity="0.55"/><path d="M901 102h1v3h-1zM902 101h1v1h-1zM902 105h1v1h-1z" fill="#006400"/><path d="M903 100h1v1h-1zM903 106h1v1h-1z" fill="#006400" fill-opacity="0.55"/><path d="M909 102h1v3h-1zM910 101h1v1h-1zM910 105h1v1h-1z" fill="#006400"/><path d="M911 100h1v1h-1zM911 106h1v1h-1z" fill="#006400" fill-opacity="0.55"/><path d="M917 102h1v3h-1zM918 101h1v1h-1zM918 105h1v1h-1z" fill="#006400"/><path d="M919 100h1v1h-1zM919 106h1v1h-1z" fill="#006400" fill-opacity="0.55"/><path d="M925 102h1v3h-1zM926 101h1v1h-1zM926 105h1v1h-1z" fill="#006400"/><path d="M927 100h1v1h-1zM927 106h1v1h-1z" fill="#006400" fill-opacity="0.55"/><path d="M933 102h1v3h-1zM934 101h1v1h-1zM934 105h1v1h-1z" fill="#006400"/><path d="M935 100h1v1h-1zM935 106h1v1h-1z" fill="#006400" fill-opacity="0.55"/><path d="M941 102h1v3h-1zM942 101h1v1h-1zM942 105h1v1h-1z" fill="#006400"/><path d="M943 100h1v1h-1zM943 106h1v1h-1z" fill="#006400" fill-opacity="0.55"/>
<rect x="157" y="119" width="792" height="1" fill="#0c0c78"/><path d="M161 118h1v3h-1zM160 117h1v1h-1zM160 121h1v1h-1z" fill="#0c0c78"/><path d="M159 116h1v1h-1zM159 122h1v1h-1z" fill="#0c0c78" fill-opacity="0.55"/><path d="M169 118h1v3h-1zM168 117h1v1h-1zM168 121h1v1h-1z" fill="#0c0c78"/><path d="M167 116h1v1h-1zM167 122h1v1h-1z" fill="#0c0c78" fill-opacity="0.55"/><path d="M177 118h1v3h-1zM176 117h1v1h-1zM176 121h1v1h-1z" fill="#0c0c78"/><path d="M175 116h1v1h-1zM175 122h1v1h-1z" fill="#0c0c78" fill-opacity="0.55"/><path d="M185 118h1v3h-1zM184 117h1v1h-1zM184 121h1v1h-1z" fill="#0c0c78"/><path d="M183 116h1v1h-1zM183 122h1v1h-1z" fill="#0c0c78" fill-opacity="0.55"/><path d="M193 118h1v3h-1zM192 117h1v1h-1zM192 121h1v1h-1z" fill="#0c0c78"/><path d="M191 116h1v1h-1zM191 122h1v1h-1z" fill="#0c0c78" fill-opacity="0.55"/><path d="M201 118h1v3h-1zM200 117h1v1h-1zM200 121h1v1h-1z" fill="#0c0c78"/><path d="M199 116h1v1h-1zM199 122h1v1h-1z" fill="#0c0c78" fill-opacity="0.55"/><path d="M209 118h1v3h-1zM208 117h1v1h-1zM208 121h1v1h-1z" fill="#0c0c78"/><path d="M207 116h1v1h-1zM207 122h1v1h-1z" fill="#0c0c78" fill-opacity="0.55"/><path d="M217 118h1v3h-1zM216 117h1v1h-1zM216 121h1v1h-1z" fill="#0c0c78"/><path d="M215 116h1v1h-1zM215 122h1v1h-1z" fill="#0c0c78" fill-opacity="0.55"/><path d="M225 118h1v3h-1zM224 117h1v1h-1zM224 121h1v1h-1z" fill="#0c0c78"/><path d="M223 116h1v1h-1zM223 122h1v1h-1z" fill="#0c0c78" fill-opacity="0.55"/><path d="M233 118h1v3h-1zM232 117h1v1h-1zM232 121h1v1h-1z" fill="#0c0c78"/><path d="M231 116h1v1h-1zM231 122h1v1h-1z" fill="#0c0c78" fill-opacity="0.55"/><path d="M241 118h1v3h-1zM240 117h1v1h-1zM240 121h1v1h-1z" fill="#0c0c78"/><path d="M239 116h1v1h-1zM239 122h1v1h-1z" fill="#0c0c78" fill-opacity="0.55"/><path d="M249 118h1v3h-1zM248 117h1v1h-1zM248 121h1v1h-1z" fill="#0c0c78"/><path d="M247 116h1v1h-1zM247 122h1v1h-1z" fill="#0c0c78" fill-opacity="0.55"/><path d="M257 118h1v3h-1zM256 117h1v1h-1zM256 121h1v1h-1z" fill="#0c0c78"/><path d="M255 116h1v1h-1zM255 122h1v1h-1z" fill="#0c0c78" fill-opacity="0.55"/><path d="M265 118h1v3h-1zM264 117h1v1h-1zM264 121h1v1h-1z" fill="#0c0c78"/><path d="M263 116h1v1h-1zM263 122h1v1h-1z" fill="#0c0c78" fill-opacity="0.55"/><path d="M273 118h1v3h-1zM272 117h1v1h-1zM272 121h1v1h-1z" fill="#0c0c78"/><path d="M271 116h1v1h-1zM271 122h1v1h-1z" fill="#0c0c78" fill-opacity="0.55"/><path d="M281 118h1v3h-1zM280 117h1v1h-1zM280 121h1v1h-1z" fill="#0c0c78"/><path d="M279 116h1v1h-1zM279 122h1v1h-1z" fill="#0c0c78" fill-opacity="0.55"/><path d="M289 118h1v3h-1zM288 117h1v1h-1zM288 121h1v1h-1z" fill="#0c0c78"/><path d="M287 116h1v1h-1zM287 122h1v1h-1z" fill="#0c0c78" fill-opacity="0.55"/><path d="M297 118h1v3h-1zM296 117h1v1h-1zM296 121h1v1h-1z" fill="#0c0c78"/><path d="M295 116h1v1h-1zM295 122h1v1h-1z" fill="#0c0c78" fill-opacity="0.55"/><path d="M305 118h1v3h-1zM304 117h1v1h-1zM304 121h1v1h-1z" fill="#0c0c78"/><path d="M303 116h1v1h-1zM303 122h1v1h-1z" fill="#0c0c78" fill-opacity="0.55"/><path d="M313 118h1v3h-1zM312 117h1v1h-1zM312 121h1v1h-1z" fill="#0c0c78"/><path d="M311 116h1v1h-1zM311 122h1v1h-1z" fill="#0c0c78" fill-opacity="0.55"/><path d="M321 118h1v3h-1zM320 117h1v1h-1zM320 121h1v1h-1z" fill="#0c0c78"/><path d="M319 116h1v1h-1zM319 122h1v1h-1z" fill="#0c0c78" fill-opacity="0.55"/><path d="M329 118h1v3h-1zM328 117h1v1h-1zM328 121h1v1h-1z" fill="#0c0c78"/><path d="M327 116h1v1h-1zM327 122h1v1h-1z" fill="#0c0c78" fill-opacity="0.55"/><path d="M337 118h1v3h-1zM336 117h1v1h-1zM336 121h1v1h-1z" fill="#0c0c78"/><path d="M335 116h1v1h-1zM335 122h1v1h-1z" fill="#0c0c78" fill-opacity="0.55"/><path d="M345 118h1v3h-1zM344 117h1v1h-1zM344 121h1v1h-1z" fill="#0c0c78"/><path d="M343 116h1v1h-1zM343 122h1v1h-1z" fill="#0c0c78" fill-opacity="0.55"/><path d="M353 118h1v3h-1zM352 117h1v1h-1zM352 121h1v1h-1z" fill="#0c0c78"/><path d="M351 116h1v1h-1zM351 122h1v1h-1z" fill="#0c0c78" fill-opacity="0.55"/><path d="M361 118h1v3h-1zM360 117h1v1h-1zM360 121h1v1h-1z" fill="#0c0c78"/><path d="M359 116h1v1h-1zM359 122h1v1h-1z" fill="#0c0c78" fill-opacity="0.55"/><path d="M369 118h1v3h-1zM368 117h1v1h-1zM368 121h1v1h-1z" fill="#0c0c78"/><path d="M367 116h1v1h-1zM367 122h1v1h-1z" fill="#0c0c78" fill-opacity="0.55"/><path d="M377 118h1v3h-1zM376 117h1v1h-1zM376 121h1v1h-1z" fill="#0c0c78"/><path d="M375 116h1v1h-1zM375 122h1v1h-1z" fill="#0c0c78" fill-opacity="0.55"/><path d="M385 118h1v3h-1zM384 117h1v1h-1zM384 121h1v1h-1z" fill="#0c0c78"/><path d="M383 116h1v1h-1zM383 122h1v1h-1z" fill="#0c0c78" fill-opacity="0.55"/><path d="M393 118h1v3h-1zM392 117h1v1h-1zM392 121h1v1h-1z" fill="#0c0c78"/><path d="M391 116h1v1h-1zM391 122h1v1h-1z" fill="#0c0c78" fill-opacity="0.55"/><path d="M401 118h1v3h-1zM400 117h1v1h-1zM400 121h1v1h-1z" fill="#0c0c78"/><path d="M399 116h1v1h-1zM399 122h1v1h-1z" fill="#0c0c78" fill-opacity="0.55"/><path d="M409 118h1v3h-1zM408 117h1v1h-1zM408 121h1v1h-1z" fill="#0c0c78"/><path d="M407 116h1v1h-1zM407 122h1v1h-1z" fill="#0c0c78" fill-opacity="0.55"/><path d="M417 118h1v3h-1zM416 117h1v1h-1zM416 121h1v1h-1z" fill="#0c0c78"/><path d="M415 116h1v1h-1zM415 122h1v1h-1z" fill="#0c0c78" fill-opacity="0.55"/><path d="M425 118h1v3h-1zM424 117h1v1h-1zM424 121h1v1h-1z" fill="#0c0c78"/><path d="M423 116h1v1h-1zM423 122h1v1h-1z" fill="#0c0c78" fill-opacity="0.55"/><path d="M433 118h1v3h-1zM432 117h1v1h-1zM432 121h1v1h-1z" fill="#0c0c78"/><path d="M431 116h1v1h-1zM431 122h1v1h-1z" fill="#0c0c78" fill-opacity="0.55"/><path d="M441 118h1v3h-1zM440 117h1v1h-1zM440 121h1v1h-1z" fill="#0c0c78"/><path d="M439 116h1v1h-1zM439 122h1v1h-1z" fill="#0c0c78" fill-opacity="0.55"/><path d="M449 118h1v3h-1zM448 117h1v1h-1zM448 121h1v1h-1z" fill="#0c0c78"/><path d="M447 116h1v1h-1zM447 122h1v1h-1z" fill="#0c0c78" fill-opacity="0.55"/><path d="M457 118h1v3h-1zM456 117h1v1h-1zM456 121h1v1h-1z" fill="#0c0c78"/><path d="M455 116h1v1h-1zM455 122h1v1h-1z" fill="#0c0c78" fill-opacity="0.55"/><path d="M465 118h1v3h-1zM464 117h1v1h-1zM464 121h1v1h-1z" fill="#0c0c78"/><path d="M463 116h1v1h-1zM463 122h1v1h-1z" fill="#0c0c78" fill-opacity="0.55"/><path d="M473 118h1v3h-1zM472 117h1v1h-1zM472 121h1v1h-1z" fill="#0c0c78"/><path d="M471 116h1v1h-1zM471 122h1v1h-1z" fill="#0c0c78" fill-opacity="0.55"/><path d="M481 118h1v3h-1zM480 117h1v1h-1zM480 121h1v1h-1z" fill="#0c0c78"/><path d="M479 116h1v1h-1zM479 122h1v1h-1z" fill="#0c0c78" fill-opacity="0.55"/><path d="M489 118h1v3h-1zM488 117h1v1h-1zM488 121h1v1h-1z" fill="#0c0c78"/><path d="M487 116h1v1h-1zM487 122h1v1h-1z" fill="#0c0c78" fill-opacity="0.55"/><path d="M497 118h1v3h-1zM496 117h1v1h-1zM496 121h1v1h-1z" fill="#0c0c78"/><path d="M495 116h1v1h-1zM495 122h1v1h-1z" fill="#0c0c78" fill-opacity="0.55"/><path d="M505 118h1v3h-1zM504 117h1v1h-1zM504 121h1v1h-1z" fill="#0c0c78"/><path d="M503 116h1v1h-1zM503 122h1v1h-1z" fill="#0c0c78" fill-opacity="0.55"/><path d="M513 118h1v3h-1zM512 117h1v1h-1zM512 121h1v1h-1z" fill="#0c0c78"/><path d="M511 116h1v1h-1zM511 122h1v1h-1z" fill="#0c0c78" fill-opacity="0.55"/><path d="M521 118h1v3h-1zM520 117h1v1h-1zM520 121h1v1h-1z" fill="#0c0c78"/><path d="M519 116h1v1h-1zM519 122h1v1h-1z" fill="#0c0c78" fill-opacity="0.55"/><path d="M529 118h1v3h-1zM528 117h1v1h-1zM528 121h1v1h-1z" fill="#0c0c78"/><path d="M527 116h1v1h-1zM527 122h1v1h-1z" fill="#0c0c78" fill-opacity="0.55"/><path d="M537 118h1v3h-1zM536 117h1v1h-1zM536 121h1v1h-1z" fill="#0c0c78"/><path d="M535 116h1v1h-1zM535 122h1v1h-1z" fill="#0c0c78" fill-opacity="0.55"/><path d="M545 118h1v3h-1zM544 117h1v1h-1zM544 121h1v1h-1z" fill="#0c0c78"/><path d="M543 116h1v1h-1zM543 122h1v1h-1z" fill="#0c0c78" fill-opacity="0.55"/><path d="M553 118h1v3h-1zM552 117h1v1h-1zM552 121h1v1h-1z" fill="#0c0c78"/><path d="M551 116h1v1h-1zM551 122h1v1h-1z" fill="#0c0c78" fill-opacity="0.55"/><path d="M561 118h1v3h-1zM560 117h1v1h-1zM560 121h1v1h-1z" fill="#0c0c78"/><path d="M559 116h1v1h-1zM559 122h1v1h-1z" fill="#0c0c78" fill-opacity="0.55"/><path d="M569 118h1v3h-1zM568 117h1v1h-1zM568 121h1v1h-1z" fill="#0c0c78"/><path d="M567 116h1v1h-1zM567 122h1v1h-1z" fill="#0c0c78" fill-opacity="0.55"/><path d="M577 118h1v3h-1zM576 117h1v1h-1zM576 121h1v1h-1z" fill="#0c0c78"/><path d="M575 116h1v1h-1zM575 122h1v1h-1z" fill="#0c0c78" fill-opacity="0.55"/><path d="M585 118h1v3h-1zM584 117h1v1h-1zM584 121h1v1h-1z" fill="#0c0c78"/><path d="M583 116h1v1h-1zM583 122h1v1h-1z" fill="#0c0c78" fill-opacity="0.55"/><path d="M593 118h1v3h-1zM592 117h1v1h-1zM592 121h1v1h-1z" fill="#0c0c78"/><path d="M591 116h1v1h-1zM591 122h1v1h-1z" fill="#0c0c78" fill-opacity="0.55"/><path d="M601 118h1v3h-1zM600 117h1v1h-1zM600 121h1v1h-1z" fill="#0c0c78"/><path d="M599 116h1v1h-1zM599 122h1v1h-1z" fill="#0c0c78" fill-opacity="0.55"/><path d="M609 118h1v3h-1zM608 117h1v1h-1zM608 121h1v1h-1z" fill="#0c0c78"/><path d="M607 116h1v1h-1zM607 122h1v1h-1z" fill="#0c0c78" fill-opacity="0.55"/><path d="M617 118h1v3h-1zM616 117h1v1h-1zM616 121h1v1h-1z" fill="#0c0c78"/><path d="M615 116h1v1h-1zM615 122h1v1h-1z" fill="#0c0c78" fill-opacity="0.55"/><path d="M625 118h1v3h-1zM624 117h1v1h-1zM624 121h1v1h-1z" fill="#0c0c78"/><path d="M623 116h1v1h-1zM623 122h1v1h-1z" fill="#0c0c78" fill-opacity="0.55"/><path d="M633 118h1v3h-1zM632 117h1v1h-1zM632 121h1v1h-1z" fill="#0c0c78"/><path d="M631 116h1v1h-1zM631 122h1v1h-1z" fill="#0c0c78" fill-opacity="0.55"/><path d="M641 118h1v3h-1zM640 117h1v1h-1zM640 121h1v1h-1z" fill="#0c0c78"/><path d="M639 116h1v1h-1zM639 122h1v1h-1z" fill="#0c0c78" fill-opacity="0.55"/><path d="M649 118h1v3h-1zM648 117h1v1h-1zM648 121h1v1h-1z" fill="#0c0c78"/><path d="M647 116h1v1h-1zM647 122h1v1h-1z" fill="#0c0c78" fill-opacity="0.55"/><path d="M657 118h1v3h-1zM656 117h1v1h-1zM656 121h1v1h-1z" fill="#0c0c78"/><path d="M655 116h1v1h-1zM655 122h1v1h-1z" fill="#0c0c78" fill-opacity="0.55"/><path d="M665 118h1v3h-1zM664 117h1v1h-1zM664 121h1v1h-1z" fill="#0c0c78"/><path d="M663 116h1v1h-1zM663 122h1v1h-1z" fill="#0c0c78" fill-opacity="0.55"/><path d="M673 118h1v3h-1zM672 117h1v1h-1zM672 121h1v1h-1z" fill="#0c0c78"/><path d="M671 116h1v1h-1zM671 122h1v1h-1z" fill="#0c0c78" fill-opacity="0.55"/><path d="M681 118h1v3h-1zM680 117h1v1h-1zM680 121h1v1h-1z" fill="#0c0c78"/><path d="M679 116h1v1h-1zM679 122h1v1h-1z" fill="#0c0c78" fill-opacity="0.55"/><path d="M689 118h1v3h-1zM688 117h1v1h-1zM688 121h1v1h-1z" fill="#0c0c78"/><path d="M687 116h1v1h-1zM687 122h1v1h-1z" fill="#0c0c78" fill-opacity="0.55"/><path d="M697 118h1v3h-1zM696 117h1v1h-1zM696 121h1v1h-1z" fill="#0c0c78"/><path d="M695 116h1v1h-1zM695 122h1v1h-1z" fill="#0c0c78" fill-opacity="0.55"/><path d="M705 118h1v3h-1zM704 117h1v1h-1zM704 121h1v1h-1z" fill="#0c0c78"/><path d="M703 116h1v1h-1zM703 122h1v1h-1z" fill="#0c0c78" fill-opacity="0.55"/><path d="M713 118h1v3h-1zM712 117h1v1h-1zM712 121h1v1h-1z" fill="#0c0c78"/><path d="M711 116h1v1h-1zM711 122h1v1h-1z" fill="#0c0c78" fill-opacity="0.55"/><path d="M721 118h1v3h-1zM720 117h1v1h-1zM720 121h1v1h-1z" fill="#0c0c78"/><path d="M719 116h1v1h-1zM719 122h1v1h-1z" fill="#0c0c78" fill-opacity="0.55"/><path d="M729 118h1v3h-1zM728 117h1v1h-1zM728 121h1v1h-1z" fill="#0c0c78"/><path d="M727 116h1v1h-1zM727 122h1v1h-1z" fill="#0c0c78" fill-opacity="0.55"/><path d="M737 118h1v3h-1zM736 117h1v1h-1zM736 121h1v1h-1z" fill="#0c0c78"/><path d="M735 116h1v1h-1zM735 122h1v1h-1z" fill="#0c0c78" fill-opacity="0.55"/><path d="M745 118h1v3h-1zM744 117h1v1h-1zM744 121h1v1h-1z" fill="#0c0c78"/><path d="M743 116h1v1h-1zM743 122h1v1h-1z" fill="#0c0c78" fill-opacity="0.55"/><path d="M753 118h1v3h-1zM752 117h1v1h-1zM752 121h1v1h-1z" fill="#0c0c78"/><path d="M751 116h1v1h-1zM751 122h1v1h-1z" fill="#0c0c78" fill-opacity="0.55"/><path d="M761 118h1v3h-1zM760 117h1v1h-1zM760 121h1v1h-1z" fill="#0c0c78"/><path d="M759 116h1v1h-1zM759 122h1v1h-1z" fill="#0c0c78" fill-opacity="0.55"/><path d="M769 118h1v3h-1zM768 117h1v1h-1zM768 121h1v1h-1z" fill="#0c0c78"/><path d="M767 116h1v1h-1zM767 122h1v1h-1z" fill="#0c0c78" fill-opacity="0.55"/><path d="M777 118h1v3h-1zM776 117h1v1h-1zM776 121h1v1h-1z" fill="#0c0c78"/><path d="M775 116h1v1h-1zM775 122h1v1h-1z" fill="#0c0c78" fill-opacity="0.55"/><path d="M785 118h1v3h-1zM784 117h1v1h-1zM784 121h1v1h-1z" fill="#0c0c78"/><path d="M783 116h1v1h-1zM783 122h1v1h-1z" fill="#0c0c78" fill-opacity="0.55"/><path d="M793 118h1v3h-1zM792 117h1v1h-1zM792 121h1v1h-1z" fill="#0c0c78"/><path d="M791 116h1v1h-1zM791 122h1v1h-1z" fill="#0c0c78" fill-opacity="0.55"/><path d="M801 118h1v3h-1zM800 117h1v1h-1zM800 121h1v1h-1z" fill="#0c0c78"/><path d="M799 116h1v1h-1zM799 122h1v1h-1z" fill="#0c0c78" fill-opacity="0.55"/><path d="M809 118h1v3h-1zM808 117h1v1h-1zM808 121h1v1h-1z" fill="#0c0c78"/><path d="M807 116h1v1h-1zM807 122h1v1h-1z" fill="#0c0c78" fill-opacity="0.55"/><path d="M817 118h1v3h-1zM816 117h1v1h-1zM816 121h1v1h-1z" fill="#0c0c78"/><path d="M815 116h1v1h-1zM815 122h1v1h-1z" fill="#0c0c78" fill-opacity="0.55"/><path d="M825 118h1v3h-1zM824 117h1v1h-1zM824 121h1v1h-1z" fill="#0c0c78"/><path d="M823 116h1v1h-1zM823 122h1v1h-1z" fill="#0c0c78" fill-opacity="0.55"/><path d="M833 118h1v3h-1zM832 117h1v1h-1zM832 121h1v1h-1z" fill="#0c0c78"/><path d="M831 116h1v1h-1zM831 122h1v1h-1z" fill="#0c0c78" fill-opacity="0.55"/><path d="M841 118h1v3h-1zM840 117h1v1h-1zM840 121h1v1h-1z" fill="#0c0c78"/><path d="M839 116h1v1h-1zM839 122h1v1h-1z" fill="#0c0c78" fill-opacity="0.55"/><path d="M849 118h1v3h-1zM848 117h1v1h-1zM848 121h1v1h-1z" fill="#0c0c78"/><path d="M847 116h1v1h-1zM847 122h1v1h-1z" fill="#0c0c78" fill-opacity="0.55"/><path d="M857 118h1v3h-1zM856 117h1v1h-1zM856 121h1v1h-1z" fill="#0c0c78"/><path d="M855 116h1v1h-1zM855 122h1v1h-1z" fill="#0c0c78" fill-opacity="0.55"/><path d="M865 118h1v3h-1zM864 117h1v1h-1zM864 121h1v1h-1z" fill="#0c0c78"/><path d="M863 116h1v1h-1zM863 122h1v1h-1z" fill="#0c0c78" fill-opacity="0.55"/><path d="M873 118h1v3h-1zM872 117h1v1h-1zM872 121h1v1h-1z" fill="#0c0c78"/><path d="M871 116h1v1h-1zM871 122h1v1h-1z" fill="#0c0c78" fill-opacity="0.55"/><path d="M881 118h1v3h-1zM880 117h1v1h-1zM880 121h1v1h-1z" fill="#0c0c78"/><path d="M879 116h1v1h-1zM879 122h1v1h-1z" fill="#0c0c78" fill-opacity="0.55"/><path d="M889 118h1v3h-1zM888 117h1v1h-1zM888 121h1v1h-1z" fill="#0c0c78"/><path d="M887 116h1v1h-1zM887 122h1v1h-1z" fill="#0c0c78" fill-opacity="0.55"/><path d="M897 118h1v3h-1zM896 117h1v1h-1zM896 121h1v1h-1z" fill="#0c0c78"/><path d="M895 116h1v1h-1zM895 122h1v1h-1z" fill="#0c0c78" fill-opacity="0.55"/><path d="M905 118h1v3h-1zM904 117h1v1h-1zM904 121h1v1h-1z" fill="#0c0c78"/><path d="M903 116h1v1h-1zM903 122h1v1h-1z" fill="#0c0c78" fill-opacity="0.55"/><path d="M913 118h1v3h-1zM912 117h1v1h-1zM912 121h1v1h-1z" fill="#0c0c78"/><path d="M911 116h1v1h-1zM911 122h1v1h-1z" fill="#0c0c78" fill-opacity="0.55"/><path d="M921 118h1v3h-1zM920 117h1v1h-1zM920 121h1v1h-1z" fill="#0c0c78"/><path d="M919 116h1v1h-1zM919 122h1v1h-1z" fill="#0c0c78" fill-opacity="0.55"/><path d="M929 118h1v3h-1zM928 117h1v1h-1zM928 121h1v1h-1z" fill="#0c0c78"/><path d="M927 116h1v1h-1zM927 122h1v1h-1z" fill="#0c0c78" fill-opacity="0.55"/><path d="M937 118h1v3h-1zM936 117h1v1h-1zM936 121h1v1h-1z" fill="#0c0c78"/><path d="M935 116h1v1h-1zM935 122h1v1h-1z" fill="#0c0c78" fill-opacity="0.55"/><path d="M945 118h1v3h-1zM944 117h1v1h-1zM944 121h1v1h-1z" fill="#0c0c78"/><path d="M943 116h1v1h-1zM943 122h1v1h-1z" fill="#0c0c78" fill-opacity="0.55"/>
<rect x="157" y="135" width="792" height="1" fill="#0c0c78"/><path d="M161 134h1v3h-1zM160 133h1v1h-1zM160 137h1v1h-1z" fill="#0c0c78"/><path d="M159 132h1v1h-1zM159 138h1v1h-1z" fill="#0c0c78" fill-opacity="0.55"/><path d="M169 134h1v3h-1zM168 133h1v1h-1zM168 137h1v1h-1z" fill="#0c0c78"/><path d="M167 132h1v1h-1zM167 138h1v1h-1z" fill="#0c0c78" fill-opacity="0.55"/><path d="M177 134h1v3h-1zM176 133h1v1h-1zM176 137h1v1h-1z" fill="#0c0c78"/><path d="M175 132h1v1h-1zM175 138h1v1h-1z" fill="#0c0c78" fill-opacity="0.55"/><path d="M185 134h1v3h-1zM184 133h1v1h-1zM184 137h1v1h-1z" fill="#0c0c78"/><path d="M183 132h1v1h-1zM183 138h1v1h-1z" fill="#0c0c78" fill-opacity="0.55"/><path d="M193 134h1v3h-1zM192 133h1v1h-1zM192 137h1v1h-1z" fill="#0c0c78"/><path d="M191 132h1v1h-1zM191 138h1v1h-1z" fill="#0c0c78" fill-opacity="0.55"/><path d="M201 134h1v3h-1zM200 133h1v1h-1zM200 137h1v1h-1z" fill="#0c0c78"/><path d="M199 132h1v1h-1zM199 138h1v1h-1z" fill="#0c0c78" fill-opacity="0.55"/><path d="M209 134h1v3h-1zM208 133h1v1h-1zM208 137h1v1h-1z" fill="#0c0c78"/><path d="M207 132h1v1h-1zM207 138h1v1h-1z" fill="#0c0c78" fill-opacity="0.55"/><path d="M217 134h1v3h-1zM216 133h1v1h-1zM216 137h1v1h-1z" fill="#0c0c78"/><path d="M215 132h1v1h-1zM215 138h1v1h-1z" fill="#0c0c78" fill-opacity="0.55"/><path d="M225 134h1v3h-1zM224 133h1v1h-1zM224 137h1v1h-1z" fill="#0c0c78"/><path d="M223 132h1v1h-1zM223 138h1v1h-1z" fill="#0c0c78" fill-opacity="0.55"/><path d="M233 134h1v3h-1zM232 133h1v1h-1zM232 137h1v1h-1z" fill="#0c0c78"/><path d="M231 132h1v1h-1zM231 138h1v1h-1z" fill="#0c0c78" fill-opacity="0.55"/><path d="M241 134h1v3h-1zM240 133h1v1h-1zM240 137h1v1h-1z" fill="#0c0c78"/><path d="M239 132h1v1h-1zM239 138h1v1h-1z" fill="#0c0c78" fill-opacity="0.55"/><path d="M249 134h1v3h-1zM248 133h1v1h-1zM248 137h1v1h-1z" fill="#0c0c78"/><path d="M247 132h1v1h-1zM247 138h1v1h-1z" fill="#0c0c78" fill-opacity="0.55"/><path d="M257 134h1v3h-1zM256 133h1v1h-1zM256 137h1v1h-1z" fill="#0c0c78"/><path d="M255 132h1v1h-1zM255 138h1v1h-1z" fill="#0c0c78" fill-opacity="0.55"/><path d="M265 134h1v3h-1zM264 133h1v1h-1zM264 137h1v1h-1z" fill="#0c0c78"/><path d="M263 132h1v1h-1zM263 138h1v1h-1z" fill="#0c0c78" fill-opacity="0.55"/><path d="M273 134h1v3h-1zM272 133h1v1h-1zM272 137h1v1h-1z" fill="#0c0c78"/><path d="M271 132h1v1h-1zM271 138h1v1h-1z" fill="#0c0c78" fill-opacity="0.55"/><path d="M281 134h1v3h-1zM280 133h1v1h-1zM280 137h1v1h-1z" fill="#0c0c78"/><path d="M279 132h1v1h-1zM279 138h1v1h-1z" fill="#0c0c78" fill-opacity="0.55"/><path d="M289 134h1v3h-1zM288 133h1v1h-1zM288 137h1v1h-1z" fill="#0c0c78"/><path d="M287 132h1v1h-1zM287 138h1v1h-1z" fill="#0c0c78" fill-opacity="0.55"/><path d="M297 134h1v3h-1zM296 133h1v1h-1zM296 137h1v1h-1z" fill="#0c0c78"/><path d="M295 132h1v1h-1zM295 138h1v1h-1z" fill="#0c0c78" fill-opacity="0.55"/><path d="M305 134h1v3h-1zM304 133h1v1h-1zM304 137h1v1h-1z" fill="#0c0c78"/><path d="M303 132h1v1h-1zM303 138h1v1h-1z" fill="#0c0c78" fill-opacity="0.55"/><path d="M313 134h1v3h-1zM312 133h1v1h-1zM312 137h1v1h-1z" fill="#0c0c78"/><path d="M311 132h1v1h-1zM311 138h1v1h-1z" fill="#0c0c78" fill-opacity="0.55"/><path d="M321 134h1v3h-1zM320 133h1v1h-1zM320 137h1v1h-1z" fill="#0c0c78"/><path d="M319 132h1v1h-1zM319 138h1v1h-1z" fill="#0c0c78" fill-opacity="0.55"/><path d="M329 134h1v3h-1zM328 133h1v1h-1zM328 137h1v1h-1z" fill="#0c0c78"/><path d="M327 132h1v1h-1zM327 138h1v1h-1z" fill="#0c0c78" fill-opacity="0.55"/><path d="M337 134h1v3h-1zM336 133h1v1h-1zM336 137h1v1h-1z" fill="#0c0c78"/><path d="M335 132h1v1h-1zM335 138h1v1h-1z" fill="#0c0c78" fill-opacity="0.55"/><path d="M345 134h1v3h-1zM344 133h1v1h-1zM344 137h1v1h-1z" fill="#0c0c78"/><path d="M343 132h1v1h-1zM343 138h1v1h-1z" fill="#0c0c78" fill-opacity="0.55"/><path d="M353 134h1v3h-1zM352 133h1v1h-1zM352 137h1v1h-1z" fill="#0c0c78"/><path d="M351 132h1v1h-1zM351 138h1v1h-1z" fill="#0c0c78" fill-opacity="0.55"/><path d="M361 134h1v3h-1zM360 133h1v1h-1zM360 137h1v1h-1z" fill="#0c0c78"/><path d="M359 132h1v1h-1zM359 138h1v1h-1z" fill="#0c0c78" fill-opacity="0.55"/><path d="M369 134h1v3h-1zM368 133h1v1h-1zM368 137h1v1h-1z" fill="#0c0c78"/><path d="M367 132h1v1h-1zM367 138h1v1h-1z" fill="#0c0c78" fill-opacity="0.55"/><path d="M377 134h1v3h-1zM376 133h1v1h-1zM376 137h1v1h-1z" fill="#0c0c78"/><path d="M375 132h1v1h-1zM375 138h1v1h-1z" fill="#0c0c78" fill-opacity="0.55"/><path d="M385 134h1v3h-1zM384 133h1v1h-1zM384 137h1v1h-1z" fill="#0c0c78"/><path d="M383 132h1v1h-1zM383 138h1v1h-1z" fill="#0c0c78" fill-opacity="0.55"/><path d="M393 134h1v3h-1zM392 133h1v1h-1zM392 137h1v1h-1z" fill="#0c0c78"/><path d="M391 132h1v1h-1zM391 138h1v1h-1z" fill="#0c0c78" fill-opacity="0.55"/><path d="M401 134h1v3h-1zM400 133h1v1h-1zM400 137h1v1h-1z" fill="#0c0c78"/><path d="M399 132h1v1h-1zM399 138h1v1h-1z" fill="#0c0c78" fill-opacity="0.55"/><path d="M409 134h1v3h-1zM408 133h1v1h-1zM408 137h1v1h-1z" fill="#0c0c78"/><path d="M407 132h1v1h-1zM407 138h1v1h-1z" fill="#0c0c78" fill-opacity="0.55"/><path d="M417 134h1v3h-1zM416 133h1v1h-1zM416 137h1v1h-1z" fill="#0c0c78"/><path d="M415 132h1v1h-1zM415 138h1v1h-1z" fill="#0c0c78" fill-opacity="0.55"/><path d="M425 134h1v3h-1zM424 133h1v1h-1zM424 137h1v1h-1z" fill="#0c0c78"/><path d="M423 132h1v1h-1zM423 138h1v1h-1z" fill="#0c0c78" fill-opacity="0.55"/><path d="M433 134h1v3h-1zM432 133h1v1h-1zM432 137h1v1h-1z" fill="#0c0c78"/><path d="M431 132h1v1h-1zM431 138h1v1h-1z" fill="#0c0c78" fill-opacity="0.55"/><path d="M441 134h1v3h-1zM440 133h1v1h-1zM440 137h1v1h-1z" fill="#0c0c78"/><path d="M439 132h1v1h-1zM439 138h1v1h-1z" fill="#0c0c78" fill-opacity="0.55"/><path d="M449 134h1v3h-1zM448 133h1v1h-1zM448 137h1v1h-1z" fill="#0c0c78"/><path d="M447 132h1v1h-1zM447 138h1v1h-1z" fill="#0c0c78" fill-opacity="0.55"/><path d="M457 134h1v3h-1zM456 133h1v1h-1zM456 137h1v1h-1z" fill="#0c0c78"/><path d="M455 132h1v1h-1zM455 138h1v1h-1z" fill="#0c0c78" fill-opacity="0.55"/><path d="M465 134h1v3h-1zM464 133h1v1h-1zM464 137h1v1h-1z" fill="#0c0c78"/><path d="M463 132h1v1h-1zM463 138h1v1h-1z" fill="#0c0c78" fill-opacity="0.55"/><path d="M473 134h1v3h-1zM472 133h1v1h-1zM472 137h1v1h-1z" fill="#0c0c78"/><path d="M471 132h1v1h-1zM471 138h1v1h-1z" fill="#0c0c78" fill-opacity="0.55"/><path d="M481 134h1v3h-1zM480 133h1v1h-1zM480 137h1v1h-1z" fill="#0c0c78"/><path d="M479 132h1v1h-1zM479 138h1v1h-1z" fill="#0c0c78" fill-opacity="0.55"/><path d="M489 134h1v3h-1zM488 133h1v1h-1zM488 137h1v1h-1z" fill="#0c0c78"/><path d="M487 132h1v1h-1zM487 138h1v1h-1z" fill="#0c0c78" fill-opacity="0.55"/><path d="M497 134h1v3h-1zM496 133h1v1h-1zM496 137h1v1h-1z" fill="#0c0c78"/><path d="M495 132h1v1h-1zM495 138h1v1h-1z" fill="#0c0c78" fill-opacity="0.55"/><path d="M505 134h1v3h-1zM504 133h1v1h-1zM504 137h1v1h-1z" fill="#0c0c78"/><path d="M503 132h1v1h-1zM503 138h1v1h-1z" fill="#0c0c78" fill-opacity="0.55"/><path d="M513 134h1v3h-1zM512 133h1v1h-1zM512 137h1v1h-1z" fill="#0c0c78"/><path d="M511 132h1v1h-1zM511 138h1v1h-1z" fill="#0c0c78" fill-opacity="0.55"/><path d="M521 134h1v3h-1zM520 133h1v1h-1zM520 137h1v1h-1z" fill="#0c0c78"/><path d="M519 132h1v1h-1zM519 138h1v1h-1z" fill="#0c0c78" fill-opacity="0.55"/><path d="M529 134h1v3h-1zM528 133h1v1h-1zM528 137h1v1h-1z" fill="#0c0c78"/><path d="M527 132h1v1h-1zM527 138h1v1h-1z" fill="#0c0c78" fill-opacity="0.55"/><path d="M537 134h1v3h-1zM536 133h1v1h-1zM536 137h1v1h-1z" fill="#0c0c78"/><path d="M535 132h1v1h-1zM535 138h1v1h-1z" fill="#0c0c78" fill-opacity="0.55"/><path d="M545 134h1v3h-1zM544 133h1v1h-1zM544 137h1v1h-1z" fill="#0c0c78"/><path d="M543 132h1v1h-1zM543 138h1v1h-1z" fill="#0c0c78" fill-opacity="0.55"/><path d="M553 134h1v3h-1zM552 133h1v1h-1zM552 137h1v1h-1z" fill="#0c0c78"/><path d="M551 132h1v1h-1zM551 138h1v1h-1z" fill="#0c0c78" fill-opacity="0.55"/><path d="M561 134h1v3h-1zM560 133h1v1h-1zM560 137h1v1h-1z" fill="#0c0c78"/><path d="M559 132h1v1h-1zM559 138h1v1h-1z" fill="#0c0c78" fill-opacity="0.55"/><path d="M569 134h1v3h-1zM568 133h1v1h-1zM568 137h1v1h-1z" fill="#0c0c78"/><path d="M567 132h1v1h-1zM567 138h1v1h-1z" fill="#0c0c78" fill-opacity="0.55"/><path d="M577 134h1v3h-1zM576 133h1v1h-1zM576 137h1v1h-1z" fill="#0c0c78"/><path d="M575 132h1v1h-1zM575 138h1v1h-1z" fill="#0c0c78" fill-opacity="0.55"/><path d="M585 134h1v3h-1zM584 133h1v1h-1zM584 137h1v1h-1z" fill="#0c0c78"/><path d="M583 132h1v1h-1zM583 138h1v1h-1z" fill="#0c0c78" fill-opacity="0.55"/><path d="M593 134h1v3h-1zM592 133h1v1h-1zM592 137h1v1h-1z" fill="#0c0c78"/><path d="M591 132h1v1h-1zM591 138h1v1h-1z" fill="#0c0c78" fill-opacity="0.55"/><path d="M601 134h1v3h-1zM600 133h1v1h-1zM600 137h1v1h-1z" fill="#0c0c78"/><path d="M599 132h1v1h-1zM599 138h1v1h-1z" fill="#0c0c78" fill-opacity="0.55"/><path d="M609 134h1v3h-1zM608 133h1v1h-1zM608 137h1v1h-1z" fill="#0c0c78"/><path d="M607 132h1v1h-1zM607 138h1v1h-1z" fill="#0c0c78" fill-opacity="0.55"/><path d="M617 134h1v3h-1zM616 133h1v1h-1zM616 137h1v1h-1z" fill="#0c0c78"/><path d="M615 132h1v1h-1zM615 138h1v1h-1z" fill="#0c0c78" fill-opacity="0.55"/><path d="M625 134h1v3h-1zM624 133h1v1h-1zM624 137h1v1h-1z" fill="#0c0c78"/><path d="M623 132h1v1h-1zM623 138h1v1h-1z" fill="#0c0c78" fill-opacity="0.55"/><path d="M633 134h1v3h-1zM632 133h1v1h-1zM632 137h1v1h-1z" fill="#0c0c78"/><path d="M631 132h1v1h-1zM631 138h1v1h-1z" fill="#0c0c78" fill-opacity="0.55"/><path d="M641 134h1v3h-1zM640 133h1v1h-1zM640 137h1v1h-1z" fill="#0c0c78"/><path d="M639 132h1v1h-1zM639 138h1v1h-1z" fill="#0c0c78" fill-opacity="0.55"/><path d="M649 134h1v3h-1zM648 133h1v1h-1zM648 137h1v1h-1z" fill="#0c0c78"/><path d="M647 132h1v1h-1zM647 138h1v1h-1z" fill="#0c0c78" fill-opacity="0.55"/><path d="M657 134h1v3h-1zM656 133h1v1h-1zM656 137h1v1h-1z" fill="#0c0c78"/><path d="M655 132h1v1h-1zM655 138h1v1h-1z" fill="#0c0c78" fill-opacity="0.55"/><path d="M665 134h1v3h-1zM664 133h1v1h-1zM664 137h1v1h-1z" fill="#0c0c78"/><path d="M663 132h1v1h-1zM663 138h1v1h-1z" fill="#0c0c78" fill-opacity="0.55"/><path d="M673 134h1v3h-1zM672 133h1v1h-1zM672 137h1v1h-1z" fill="#0c0c78"/><path d="M671 132h1v1h-1zM671 138h1v1h-1z" fill="#0c0c78" fill-opacity="0.55"/><path d="M681 134h1v3h-1zM680 133h1v1h-1zM680 137h1v1h-1z" fill="#0c0c78"/><path d="M679 132h1v1h-1zM679 138h1v1h-1z" fill="#0c0c78" fill-opacity="0.55"/><path d="M689 134h1v3h-1zM688 133h1v1h-1zM688 137h1v1h-1z" fill="#0c0c78"/><path d="M687 132h1v1h-1zM687 138h1v1h-1z" fill="#0c0c78" fill-opacity="0.55"/><path d="M697 134h1v3h-1zM696 133h1v1h-1zM696 137h1v1h-1z" fill="#0c0c78"/><path d="M695 132h1v1h-1zM695 138h1v1h-1z" fill="#0c0c78" fill-opacity="0.55"/><path d="M705 134h1v3h-1zM704 133h1v1h-1zM704 137h1v1h-1z" fill="#0c0c78"/><path d="M703 132h1v1h-1zM703 138h1v1h-1z" fill="#0c0c78" fill-opacity="0.55"/><path d="M713 134h1v3h-1zM712 133h1v1h-1zM712 137h1v1h-1z" fill="#0c0c78"/><path d="M711 132h1v1h-1zM711 138h1v1h-1z" fill="#0c0c78" fill-opacity="0.55"/><path d="M721 134h1v3h-1zM720 133h1v1h-1zM720 137h1v1h-1z" fill="#0c0c78"/><path d="M719 132h1v1h-1zM719 138h1v1h-1z" fill="#0c0c78" fill-opacity="0.55"/><path d="M729 134h1v3h-1zM728 133h1v1h-1zM728 137h1v1h-1z" fill="#0c0c78"/><path d="M727 132h1v1h-1zM727 138h1v1h-1z" fill="#0c0c78" fill-opacity="0.55"/><path d="M737 134h1v3h-1zM736 133h1v1h-1zM736 137h1v1h-1z" fill="#0c0c78"/><path d="M735 132h1v1h-1zM735 138h1v1h-1z" fill="#0c0c78" fill-opacity="0.55"/><path d="M745 134h1v3h-1zM744 133h1v1h-1zM744 137h1v1h-1z" fill="#0c0c78"/><path d="M743 132h1v1h-1zM743 138h1v1h-1z" fill="#0c0c78" fill-opacity="0.55"/><path d="M753 134h1v3h-1zM752 133h1v1h-1zM752 137h1v1h-1z" fill="#0c0c78"/><path d="M751 132h1v1h-1zM751 138h1v1h-1z" fill="#0c0c78" fill-opacity="0.55"/><path d="M761 134h1v3h-1zM760 133h1v1h-1zM760 137h1v1h-1z" fill="#0c0c78"/><path d="M759 132h1v1h-1zM759 138h1v1h-1z" fill="#0c0c78" fill-opacity="0.55"/><path d="M769 134h1v3h-1zM768 133h1v1h-1zM768 137h1v1h-1z" fill="#0c0c78"/><path d="M767 132h1v1h-1zM767 138h1v1h-1z" fill="#0c0c78" fill-opacity="0.55"/><path d="M777 134h1v3h-1zM776 133h1v1h-1zM776 137h1v1h-1z" fill="#0c0c78"/><path d="M775 132h1v1h-1zM775 138h1v1h-1z" fill="#0c0c78" fill-opacity="0.55"/><path d="M785 134h1v3h-1zM784 133h1v1h-1zM784 137h1v1h-1z" fill="#0c0c78"/><path d="M783 132h1v1h-1zM783 138h1v1h-1z" fill="#0c0c78" fill-opacity="0.55"/><path d="M793 134h1v3h-1zM792 133h1v1h-1zM792 137h1v1h-1z" fill="#0c0c78"/><path d="M791 132h1v1h-1zM791 138h1v1h-1z" fill="#0c0c78" fill-opacity="0.55"/><path d="M801 134h1v3h-1zM800 133h1v1h-1zM800 137h1v1h-1z" fill="#0c0c78"/><path d="M799 132h1v1h-1zM799 138h1v1h-1z" fill="#0c0c78" fill-opacity="0.55"/><path d="M809 134h1v3h-1zM808 133h1v1h-1zM808 137h1v1h-1z" fill="#0c0c78"/><path d="M807 132h1v1h-1zM807 138h1v1h-1z" fill="#0c0c78" fill-opacity="0.55"/><path d="M817 134h1v3h-1zM816 133h1v1h-1zM816 137h1v1h-1z" fill="#0c0c78"/><path d="M815 132h1v1h-1zM815 138h1v1h-1z" fill="#0c0c78" fill-opacity="0.55"/><path d="M825 134h1v3h-1zM824 133h1v1h-1zM824 137h1v1h-1z" fill="#0c0c78"/><path d="M823 132h1v1h-1zM823 138h1v1h-1z" fill="#0c0c78" fill-opacity="0.55"/><path d="M833 134h1v3h-1zM832 133h1v1h-1zM832 137h1v1h-1z" fill="#0c0c78"/><path d="M831 132h1v1h-1zM831 138h1v1h-1z" fill="#0c0c78" fill-opacity="0.55"/><path d="M841 134h1v3h-1zM840 133h1v1h-1zM840 137h1v1h-1z" fill="#0c0c78"/><path d="M839 132h1v1h-1zM839 138h1v1h-1z" fill="#0c0c78" fill-opacity="0.55"/><path d="M849 134h1v3h-1zM848 133h1v1h-1zM848 137h1v1h-1z" fill="#0c0c78"/><path d="M847 132h1v1h-1zM847 138h1v1h-1z" fill="#0c0c78" fill-opacity="0.55"/><path d="M857 134h1v3h-1zM856 133h1v1h-1zM856 137h1v1h-1z" fill="#0c0c78"/><path d="M855 132h1v1h-1zM855 138h1v1h-1z" fill="#0c0c78" fill-opacity="0.55"/><path d="M865 134h1v3h-1zM864 133h1v1h-1zM864 137h1v1h-1z" fill="#0c0c78"/><path d="M863 132h1v1h-1zM863 138h1v1h-1z" fill="#0c0c78" fill-opacity="0.55"/><path d="M873 134h1v3h-1zM872 133h1v1h-1zM872 137h1v1h-1z" fill="#0c0c78"/><path d="M871 132h1v1h-1zM871 138h1v1h-1z" fill="#0c0c78" fill-opacity="0.55"/><path d="M881 134h1v3h-1zM880 133h1v1h-1zM880 137h1v1h-1z" fill="#0c0c78"/><path d="M879 132h1v1h-1zM879 138h1v1h-1z" fill="#0c0c78" fill-opacity="0.55"/><path d="M889 134h1v3h-1zM888 133h1v1h-1zM888 137h1v1h-1z" fill="#0c0c78"/><path d="M887 132h1v1h-1zM887 138h1v1h-1z" fill="#0c0c78" fill-opacity="0.55"/><path d="M897 134h1v3h-1zM896 133h1v1h-1zM896 137h1v1h-1z" fill="#0c0c78"/><path d="M895 132h1v1h-1zM895 138h1v1h-1z" fill="#0c0c78" fill-opacity="0.55"/><path d="M905 134h1v3h-1zM904 133h1v1h-1zM904 137h1v1h-1z" fill="#0c0c78"/><path d="M903 132h1v1h-1zM903 138h1v1h-1z" fill="#0c0c78" fill-opacity="0.55"/><path d="M913 134h1v3h-1zM912 133h1v1h-1zM912 137h1v1h-1z" fill="#0c0c78"/><path d="M911 132h1v1h-1zM911 138h1v1h-1z" fill="#0c0c78" fill-opacity="0.55"/><path d="M921 134h1v3h-1zM920 133h1v1h-1zM920 137h1v1h-1z" fill="#0c0c78"/><path d="M919 132h1v1h-1zM919 138h1v1h-1z" fill="#0c0c78" fill-opacity="0.55"/><path d="M929 134h1v3h-1zM928 133h1v1h-1zM928 137h1v1h-1z" fill="#0c0c78"/><path d="M927 132h1v1h-1zM927 138h1v1h-1z" fill="#0c0c78" fill-opacity="0.55"/><path d="M937 134h1v3h-1zM936 133h1v1h-1zM936 137h1v1h-1z" fill="#0c0c78"/><path d="M935 132h1v1h-1zM935 138h1v1h-1z" fill="#0c0c78" fill-opacity="0.55"/><path d="M945 134h1v3h-1zM944 133h1v1h-1zM944 137h1v1h-1z" fill="#0c0c78"/><path d="M943 132h1v1h-1zM943 138h1v1h-1z" fill="#0c0c78" fill-opacity="0.55"/>
<rect x="157" y="151" width="792" height="1" fill="#0c0c78"/><path d="M161 150h1v3h-1zM160 149h1v1h-1zM160 153h1v1h-1z" fill="#0c0c78"/><path d="M159 148h1v1h-1zM159 154h1v1h-1z" fill="#0c0c78" fill-opacity="0.55"/><path d="M169 150h1v3h-1zM168 149h1v1h-1zM168 153h1v1h-1z" fill="#0c0c78"/><path d="M167 148h1v1h-1zM167 154h1v1h-1z" fill="#0c0c78" fill-opacity="0.55"/><path d="M177 150h1v3h-1zM176 149h1v1h-1zM176 153h1v1h-1z" fill="#0c0c78"/><path d="M175 148h1v1h-1zM175 154h1v1h-1z" fill="#0c0c78" fill-opacity="0.55"/><path d="M185 150h1v3h-1zM184 149h1v1h-1zM184 153h1v1h-1z" fill="#0c0c78"/><path d="M183 148h1v1h-1zM183 154h1v1h-1z" fill="#0c0c78" fill-opacity="0.55"/><path d="M193 150h1v3h-1zM192 149h1v1h-1zM192 153h1v1h-1z" fill="#0c0c78"/><path d="M191 148h1v1h-1zM191 154h1v1h-1z" fill="#0c0c78" fill-opacity="0.55"/><path d="M201 150h1v3h-1zM200 149h1v1h-1zM200 153h1v1h-1z" fill="#0c0c78"/><path d="M199 148h1v1h-1zM199 154h1v1h-1z" fill="#0c0c78" fill-opacity="0.55"/><path d="M209 150h1v3h-1zM208 149h1v1h-1zM208 153h1v1h-1z" fill="#0c0c78"/><path d="M207 148h1v1h-1zM207 154h1v1h-1z" fill="#0c0c78" fill-opacity="0.55"/><path d="M217 150h1v3h-1zM216 149h1v1h-1zM216 153h1v1h-1z" fill="#0c0c78"/><path d="M215 148h1v1h-1zM215 154h1v1h-1z" fill="#0c0c78" fill-opacity="0.55"/><path d="M225 150h1v3h-1zM224 149h1v1h-1zM224 153h1v1h-1z" fill="#0c0c78"/><path d="M223 148h1v1h-1zM223 154h1v1h-1z" fill="#0c0c78" fill-opacity="0.55"/><path d="M233 150h1v3h-1zM232 149h1v1h-1zM232 153h1v1h-1z" fill="#0c0c78"/><path d="M231 148h1v1h-1zM231 154h1v1h-1z" fill="#0c0c78" fill-opacity="0.55"/><path d="M241 150h1v3h-1zM240 149h1v1h-1zM240 153h1v1h-1z" fill="#0c0c78"/><path d="M239 148h1v1h-1zM239 154h1v1h-1z" fill="#0c0c78" fill-opacity="0.55"/><path d="M249 150h1v3h-1zM248 149h1v1h-1zM248 153h1v1h-1z" fill="#0c0c78"/><path d="M247 148h1v1h-1zM247 154h1v1h-1z" fill="#0c0c78" fill-opacity="0.55"/><path d="M257 150h1v3h-1zM256 149h1v1h-1zM256 153h1v1h-1z" fill="#0c0c78"/><path d="M255 148h1v1h-1zM255 154h1v1h-1z" fill="#0c0c78" fill-opacity="0.55"/><path d="M265 150h1v3h-1zM264 149h1v1h-1zM264 153h1v1h-1z" fill="#0c0c78"/><path d="M263 148h1v1h-1zM263 154h1v1h-1z" fill="#0c0c78" fill-opacity="0.55"/><path d="M273 150h1v3h-1zM272 149h1v1h-1zM272 153h1v1h-1z" fill="#0c0c78"/><path d="M271 148h1v1h-1zM271 154h1v1h-1z" fill="#0c0c78" fill-opacity="0.55"/><path d="M281 150h1v3h-1zM280 149h1v1h-1zM280 153h1v1h-1z" fill="#0c0c78"/><path d="M279 148h1v1h-1zM279 154h1v1h-1z" fill="#0c0c78" fill-opacity="0.55"/><path d="M289 150h1v3h-1zM288 149h1v1h-1zM288 153h1v1h-1z" fill="#0c0c78"/><path d="M287 148h1v1h-1zM287 154h1v1h-1z" fill="#0c0c78" fill-opacity="0.55"/><path d="M297 150h1v3h-1zM296 149h1v1h-1zM296 153h1v1h-1z" fill="#0c0c78"/><path d="M295 148h1v1h-1zM295 154h1v1h-1z" fill="#0c0c78" fill-opacity="0.55"/><path d="M305 150h1v3h-1zM304 149h1v1h-1zM304 153h1v1h-1z" fill="#0c0c78"/><path d="M303 148h1v1h-1zM303 154h1v1h-1z" fill="#0c0c78" fill-opacity="0.55"/><path d="M313 150h1v3h-1zM312 149h1v1h-1zM312 153h1v1h-1z" fill="#0c0c78"/><path d="M311 148h1v1h-1zM311 154h1v1h-1z" fill="#0c0c78" fill-opacity="0.55"/><path d="M321 150h1v3h-1zM320 149h1v1h-1zM320 153h1v1h-1z" fill="#0c0c78"/><path d="M319 148h1v1h-1zM319 154h1v1h-1z" fill="#0c0c78" fill-opacity="0.55"/><path d="M329 150h1v3h-1zM328 149h1v1h-1zM328 153h1v1h-1z" fill="#0c0c78"/><path d="M327 148h1v1h-1zM327 154h1v1h-1z" fill="#0c0c78" fill-opacity="0.55"/><path d="M337 150h1v3h-1zM336 149h1v1h-1zM336 153h1v1h-1z" fill="#0c0c78"/><path d="M335 148h1v1h-1zM335 154h1v1h-1z" fill="#0c0c78" fill-opacity="0.55"/><path d="M345 150h1v3h-1zM344 149h1v1h-1zM344 153h1v1h-1z" fill="#0c0c78"/><path d="M343 148h1v1h-1zM343 154h1v1h-1z" fill="#0c0c78" fill-opacity="0.55"/><path d="M353 150h1v3h-1zM352 149h1v1h-1zM352 153h1v1h-1z" fill="#0c0c78"/><path d="M351 148h1v1h-1zM351 154h1v1h-1z" fill="#0c0c78" fill-opacity="0.55"/><path d="M361 150h1v3h-1zM360 149h1v1h-1zM360 153h1v1h-1z" fill="#0c0c78"/><path d="M359 148h1v1h-1zM359 154h1v1h-1z" fill="#0c0c78" fill-opacity="0.55"/><path d="M369 150h1v3h-1zM368 149h1v1h-1zM368 153h1v1h-1z" fill="#0c0c78"/><path d="M367 148h1v1h-1zM367 154h1v1h-1z" fill="#0c0c78" fill-opacity="0.55"/><path d="M377 150h1v3h-1zM376 149h1v1h-1zM376 153h1v1h-1z" fill="#0c0c78"/><path d="M375 148h1v1h-1zM375 154h1v1h-1z" fill="#0c0c78" fill-opacity="0.55"/><path d="M385 150h1v3h-1zM384 149h1v1h-1zM384 153h1v1h-1z" fill="#0c0c78"/><path d="M383 148h1v1h-1zM383 154h1v1h-1z" fill="#0c0c78" fill-opacity="0.55"/><path d="M393 150h1v3h-1zM392 149h1v1h-1zM392 153h1v1h-1z" fill="#0c0c78"/><path d="M391 148h1v1h-1zM391 154h1v1h-1z" fill="#0c0c78" fill-opacity="0.55"/><path d="M401 150h1v3h-1zM400 149h1v1h-1zM400 153h1v1h-1z" fill="#0c0c78"/><path d="M399 148h1v1h-1zM399 154h1v1h-1z" fill="#0c0c78" fill-opacity="0.55"/><path d="M409 150h1v3h-1zM408 149h1v1h-1zM408 153h1v1h-1z" fill="#0c0c78"/><path d="M407 148h1v1h-1zM407 154h1v1h-1z" fill="#0c0c78" fill-opacity="0.55"/><path d="M417 150h1v3h-1zM416 149h1v1h-1zM416 153h1v1h-1z" fill="#0c0c78"/><path d="M415 148h1v1h-1zM415 154h1v1h-1z" fill="#0c0c78" fill-opacity="0.55"/><path d="M425 150h1v3h-1zM424 149h1v1h-1zM424 153h1v1h-1z" fill="#0c0c78"/><path d="M423 148h1v1h-1zM423 154h1v1h-1z" fill="#0c0c78" fill-opacity="0.55"/><path d="M433 150h1v3h-1zM432 149h1v1h-1zM432 153h1v1h-1z" fill="#0c0c78"/><path d="M431 148h1v1h-1zM431 154h1v1h-1z" fill="#0c0c78" fill-opacity="0.55"/><path d="M441 150h1v3h-1zM440 149h1v1h-1zM440 153h1v1h-1z" fill="#0c0c78"/><path d="M439 148h1v1h-1zM439 154h1v1h-1z" fill="#0c0c78" fill-opacity="0.55"/><path d="M449 150h1v3h-1zM448 149h1v1h-1zM448 153h1v1h-1z" fill="#0c0c78"/><path d="M447 148h1v1h-1zM447 154h1v1h-1z" fill="#0c0c78" fill-opacity="0.55"/><path d="M457 150h1v3h-1zM456 149h1v1h-1zM456 153h1v1h-1z" fill="#0c0c78"/><path d="M455 148h1v1h-1zM455 154h1v1h-1z" fill="#0c0c78" fill-opacity="0.55"/><path d="M465 150h1v3h-1zM464 149h1v1h-1zM464 153h1v1h-1z" fill="#0c0c78"/><path d="M463 148h1v1h-1zM463 154h1v1h-1z" fill="#0c0c78" fill-opacity="0.55"/><path d="M473 150h1v3h-1zM472 149h1v1h-1zM472 153h1v1h-1z" fill="#0c0c78"/><path d="M471 148h1v1h-1zM471 154h1v1h-1z" fill="#0c0c78" fill-opacity="0.55"/><path d="M481 150h1v3h-1zM480 149h1v1h-1zM480 153h1v1h-1z" fill="#0c0c78"/><path d="M479 148h1v1h-1zM479 154h1v1h-1z" fill="#0c0c78" fill-opacity="0.55"/><path d="M489 150h1v3h-1zM488 149h1v1h-1zM488 153h1v1h-1z" fill="#0c0c78"/><path d="M487 148h1v1h-1zM487 154h1v1h-1z" fill="#0c0c78" fill-opacity="0.55"/><path d="M497 150h1v3h-1zM496 149h1v1h-1zM496 153h1v1h-1z" fill="#0c0c78"/><path d="M495 148h1v1h-1zM495 154h1v1h-1z" fill="#0c0c78" fill-opacity="0.55"/><path d="M505 150h1v3h-1zM504 149h1v1h-1zM504 153h1v1h-1z" fill="#0c0c78"/><path d="M503 148h1v1h-1zM503 154h1v1h-1z" fill="#0c0c78" fill-opacity="0.55"/><path d="M513 150h1v3h-1zM512 149h1v1h-1zM512 153h1v1h-1z" fill="#0c0c78"/><path d="M511 148h1v1h-1zM511 154h1v1h-1z" fill="#0c0c78" fill-opacity="0.55"/><path d="M521 150h1v3h-1zM520 149h1v1h-1zM520 153h1v1h-1z" fill="#0c0c78"/><path d="M519 148h1v1h-1zM519 154h1v1h-1z" fill="#0c0c78" fill-opacity="0.55"/><path d="M529 150h1v3h-1zM528 149h1v1h-1zM528 153h1v1h-1z" fill="#0c0c78"/><path d="M527 148h1v1h-1zM527 154h1v1h-1z" fill="#0c0c78" fill-opacity="0.55"/><path d="M537 150h1v3h-1zM536 149h1v1h-1zM536 153h1v1h-1z" fill="#0c0c78"/><path d="M535 148h1v1h-1zM535 154h1v1h-1z" fill="#0c0c78" fill-opacity="0.55"/><path d="M545 150h1v3h-1zM544 149h1v1h-1zM544 153h1v1h-1z" fill="#0c0c78"/><path d="M543 148h1v1h-1zM543 154h1v1h-1z" fill="#0c0c78" fill-opacity="0.55"/><path d="M553 150h1v3h-1zM552 149h1v1h-1zM552 153h1v1h-1z" fill="#0c0c78"/><path d="M551 148h1v1h-1zM551 154h1v1h-1z" fill="#0c0c78" fill-opacity="0.55"/><path d="M561 150h1v3h-1zM560 149h1v1h-1zM560 153h1v1h-1z" fill="#0c0c78"/><path d="M559 148h1v1h-1zM559 154h1v1h-1z" fill="#0c0c78" fill-opacity="0.55"/><path d="M569 150h1v3h-1zM568 149h1v1h-1zM568 153h1v1h-1z" fill="#0c0c78"/><path d="M567 148h1v1h-1zM567 154h1v1h-1z" fill="#0c0c78" fill-opacity="0.55"/><path d="M577 150h1v3h-1zM576 149h1v1h-1zM576 153h1v1h-1z" fill="#0c0c78"/><path d="M575 148h1v1h-1zM575 154h1v1h-1z" fill="#0c0c78" fill-opacity="0.55"/><path d="M585 150h1v3h-1zM584 149h1v1h-1zM584 153h1v1h-1z" fill="#0c0c78"/><path d="M583 148h1v1h-1zM583 154h1v1h-1z" fill="#0c0c78" fill-opacity="0.55"/><path d="M593 150h1v3h-1zM592 149h1v1h-1zM592 153h1v1h-1z" fill="#0c0c78"/><path d="M591 148h1v1h-1zM591 154h1v1h-1z" fill="#0c0c78" fill-opacity="0.55"/><path d="M601 150h1v3h-1zM600 149h1v1h-1zM600 153h1v1h-1z" fill="#0c0c78"/><path d="M599 148h1v1h-1zM599 154h1v1h-1z" fill="#0c0c78" fill-opacity="0.55"/><path d="M609 150h1v3h-1zM608 149h1v1h-1zM608 153h1v1h-1z" fill="#0c0c78"/><path d="M607 148h1v1h-1zM607 154h1v1h-1z" fill="#0c0c78" fill-opacity="0.55"/><path d="M617 150h1v3h-1zM616 149h1v1h-1zM616 153h1v1h-1z" fill="#0c0c78"/><path d="M615 148h1v1h-1zM615 154h1v1h-1z" fill="#0c0c78" fill-opacity="0.55"/><path d="M625 150h1v3h-1zM624 149h1v1h-1zM624 153h1v1h-1z" fill="#0c0c78"/><path d="M623 148h1v1h-1zM623 154h1v1h-1z" fill="#0c0c78" fill-opacity="0.55"/><path d="M633 150h1v3h-1zM632 149h1v1h-1zM632 153h1v1h-1z" fill="#0c0c78"/><path d="M631 148h1v1h-1zM631 154h1v1h-1z" fill="#0c0c78" fill-opacity="0.55"/><path d="M641 150h1v3h-1zM640 149h1v1h-1zM640 153h1v1h-1z" fill="#0c0c78"/><path d="M639 148h1v1h-1zM639 154h1v1h-1z" fill="#0c0c78" fill-opacity="0.55"/><path d="M649 150h1v3h-1zM648 149h1v1h-1zM648 153h1v1h-1z" fill="#0c0c78"/><path d="M647 148h1v1h-1zM647 154h1v1h-1z" fill="#0c0c78" fill-opacity="0.55"/><path d="M657 150h1v3h-1zM656 149h1v1h-1zM656 153h1v1h-1z" fill="#0c0c78"/><path d="M655 148h1v1h-1zM655 154h1v1h-1z" fill="#0c0c78" fill-opacity="0.55"/><path d="M665 150h1v3h-1zM664 149h1v1h-1zM664 153h1v1h-1z" fill="#0c0c78"/><path d="M663 148h1v1h-1zM663 154h1v1h-1z" fill="#0c0c78" fill-opacity="0.55"/><path d="M673 150h1v3h-1zM672 149h1v1h-1zM672 153h1v1h-1z" fill="#0c0c78"/><path d="M671 148h1v1h-1zM671 154h1v1h-1z" fill="#0c0c78" fill-opacity="0.55"/><path d="M681 150h1v3h-1zM680 149h1v1h-1zM680 153h1v1h-1z" fill="#0c0c78"/><path d="M679 148h1v1h-1zM679 154h1v1h-1z" fill="#0c0c78" fill-opacity="0.55"/><path d="M689 150h1v3h-1zM688 149h1v1h-1zM688 153h1v1h-1z" fill="#0c0c78"/><path d="M687 148h1v1h-1zM687 154h1v1h-1z" fill="#0c0c78" fill-opacity="0.55"/><path d="M697 150h1v3h-1zM696 149h1v1h-1zM696 153h1v1h-1z" fill="#0c0c78"/><path d="M695 148h1v1h-1zM695 154h1v1h-1z" fill="#0c0c78" fill-opacity="0.55"/><path d="M705 150h1v3h-1zM704 149h1v1h-1zM704 153h1v1h-1z" fill="#0c0c78"/><path d="M703 148h1v1h-1zM703 154h1v1h-1z" fill="#0c0c78" fill-opacity="0.55"/><path d="M713 150h1v3h-1zM712 149h1v1h-1zM712 153h1v1h-1z" fill="#0c0c78"/><path d="M711 148h1v1h-1zM711 154h1v1h-1z" fill="#0c0c78" fill-opacity="0.55"/><path d="M721 150h1v3h-1zM720 149h1v1h-1zM720 153h1v1h-1z" fill="#0c0c78"/><path d="M719 148h1v1h-1zM719 154h1v1h-1z" fill="#0c0c78" fill-opacity="0.55"/><path d="M729 150h1v3h-1zM728 149h1v1h-1zM728 153h1v1h-1z" fill="#0c0c78"/><path d="M727 148h1v1h-1zM727 154h1v1h-1z" fill="#0c0c78" fill-opacity="0.55"/><path d="M737 150h1v3h-1zM736 149h1v1h-1zM736 153h1v1h-1z" fill="#0c0c78"/><path d="M735 148h1v1h-1zM735 154h1v1h-1z" fill="#0c0c78" fill-opacity="0.55"/><path d="M745 150h1v3h-1zM744 149h1v1h-1zM744 153h1v1h-1z" fill="#0c0c78"/><path d="M743 148h1v1h-1zM743 154h1v1h-1z" fill="#0c0c78" fill-opacity="0.55"/><path d="M753 150h1v3h-1zM752 149h1v1h-1zM752 153h1v1h-1z" fill="#0c0c78"/><path d="M751 148h1v1h-1zM751 154h1v1h-1z" fill="#0c0c78" fill-opacity="0.55"/><path d="M761 150h1v3h-1zM760 149h1v1h-1zM760 153h1v1h-1z" fill="#0c0c78"/><path d="M759 148h1v1h-1zM759 154h1v1h-1z" fill="#0c0c78" fill-opacity="0.55"/><path d="M769 150h1v3h-1zM768 149h1v1h-1zM768 153h1v1h-1z" fill="#0c0c78"/><path d="M767 148h1v1h-1zM767 154h1v1h-1z" fill="#0c0c78" fill-opacity="0.55"/><path d="M777 150h1v3h-1zM776 149h1v1h-1zM776 153h1v1h-1z" fill="#0c0c78"/><path d="M775 148h1v1h-1zM775 154h1v1h-1z" fill="#0c0c78" fill-opacity="0.55"/><path d="M785 150h1v3h-1zM784 149h1v1h-1zM784 153h1v1h-1z" fill="#0c0c78"/><path d="M783 148h1v1h-1zM783 154h1v1h-1z" fill="#0c0c78" fill-opacity="0.55"/><path d="M793 150h1v3h-1zM792 149h1v1h-1zM792 153h1v1h-1z" fill="#0c0c78"/><path d="M791 148h1v1h-1zM791 154h1v1h-1z" fill="#0c0c78" fill-opacity="0.55"/><path d="M801 150h1v3h-1zM800 149h1v1h-1zM800 153h1v1h-1z" fill="#0c0c78"/><path d="M799 148h1v1h-1zM799 154h1v1h-1z" fill="#0c0c78" fill-opacity="0.55"/><path d="M809 150h1v3h-1zM808 149h1v1h-1zM808 153h1v1h-1z" fill="#0c0c78"/><path d="M807 148h1v1h-1zM807 154h1v1h-1z" fill="#0c0c78" fill-opacity="0.55"/><path d="M817 150h1v3h-1zM816 149h1v1h-1zM816 153h1v1h-1z" fill="#0c0c78"/><path d="M815 148h1v1h-1zM815 154h1v1h-1z" fill="#0c0c78" fill-opacity="0.55"/><path d="M825 150h1v3h-1zM824 149h1v1h-1zM824 153h1v1h-1z" fill="#0c0c78"/><path d="M823 148h1v1h-1zM823 154h1v1h-1z" fill="#0c0c78" fill-opacity="0.55"/><path d="M833 150h1v3h-1zM832 149h1v1h-1zM832 153h1v1h-1z" fill="#0c0c78"/><path d="M831 148h1v1h-1zM831 154h1v1h-1z" fill="#0c0c78" fill-opacity="0.55"/><path d="M841 150h1v3h-1zM840 149h1v1h-1zM840 153h1v1h-1z" fill="#0c0c78"/><path d="M839 148h1v1h-1zM839 154h1v1h-1z" fill="#0c0c78" fill-opacity="0.55"/><path d="M849 150h1v3h-1zM848 149h1v1h-1zM848 153h1v1h-1z" fill="#0c0c78"/><path d="M847 148h1v1h-1zM847 154h1v1h-1z" fill="#0c0c78" fill-opacity="0.55"/><path d="M857 150h1v3h-1zM856 149h1v1h-1zM856 153h1v1h-1z" fill="#0c0c78"/><path d="M855 148h1v1h-1zM855 154h1v1h-1z" fill="#0c0c78" fill-opacity="0.55"/><path d="M865 150h1v3h-1zM864 149h1v1h-1zM864 153h1v1h-1z" fill="#0c0c78"/><path d="M863 148h1v1h-1zM863 154h1v1h-1z" fill="#0c0c78" fill-opacity="0.55"/><path d="M873 150h1v3h-1zM872 149h1v1h-1zM872 153h1v1h-1z" fill="#0c0c78"/><path d="M871 148h1v1h-1zM871 154h1v1h-1z" fill="#0c0c78" fill-opacity="0.55"/><path d="M881 150h1v3h-1zM880 149h1v1h-1zM880 153h1v1h-1z" fill="#0c0c78"/><path d="M879 148h1v1h-1zM879 154h1v1h-1z" fill="#0c0c78" fill-opacity="0.55"/><path d="M889 150h1v3h-1zM888 149h1v1h-1zM888 153h1v1h-1z" fill="#0c0c78"/><path d="M887 148h1v1h-1zM887 154h1v1h-1z" fill="#0c0c78" fill-opacity="0.55"/><path d="M897 150h1v3h-1zM896 149h1v1h-1zM896 153h1v1h-1z" fill="#0c0c78"/><path d="M895 148h1v1h-1zM895 154h1v1h-1z" fill="#0c0c78" fill-opacity="0.55"/><path d="M905 150h1v3h-1zM904 149h1v1h-1zM904 153h1v1h-1z" fill="#0c0c78"/><path d="M903 148h1v1h-1zM903 154h1v1h-1z" fill="#0c0c78" fill-opacity="0.55"/><path d="M913 150h1v3h-1zM912 149h1v1h-1zM912 153h1v1h-1z" fill="#0c0c78"/><path d="M911 148h1v1h-1zM911 154h1v1h-1z" fill="#0c0c78" fill-opacity="0.55"/><path d="M921 150h1v3h-1zM920 149h1v1h-1zM920 153h1v1h-1z" fill="#0c0c78"/><path d="M919 148h1v1h-1zM919 154h1v1h-1z" fill="#0c0c78" fill-opacity="0.55"/><path d="M929 150h1v3h-1zM928 149h1v1h-1zM928 153h1v1h-1z" fill="#0c0c78"/><path d="M927 148h1v1h-1zM927 154h1v1h-1z" fill="#0c0c78" fill-opacity="0.55"/><path d="M937 150h1v3h-1zM936 149h1v1h-1zM936 153h1v1h-1z" fill="#0c0c78"/><path d="M935 148h1v1h-1zM935 154h1v1h-1z" fill="#0c0c78" fill-opacity="0.55"/><path d="M945 150h1v3h-1zM944 149h1v1h-1zM944 153h1v1h-1z" fill="#0c0c78"/><path d="M943 148h1v1h-1zM943 154h1v1h-1z" fill="#0c0c78" fill-opacity="0.55"/>
<rect x="157" y="167" width="792" height="1" fill="#1c78b8"/><path d="M161 166h1v3h-1zM160 165h1v1h-1zM160 169h1v1h-1z" fill="#1c78b8"/><path d="M159 164h1v1h-1zM159 170h1v1h-1z" fill="#1c78b8" fill-opacity="0.55"/><path d="M169 166h1v3h-1zM168 165h1v1h-1zM168 169h1v1h-1z" fill="#1c78b8"/><path d="M167 164h1v1h-1zM167 170h1v1h-1z" fill="#1c78b8" fill-opacity="0.55"/><path d="M177 166h1v3h-1zM176 165h1v1h-1zM176 169h1v1h-1z" fill="#1c78b8"/><path d="M175 164h1v1h-1zM175 170h1v1h-1z" fill="#1c78b8" fill-opacity="0.55"/><path d="M185 166h1v3h-1zM184 165h1v1h-1zM184 169h1v1h-1z" fill="#1c78b8"/><path d="M183 164h1v1h-1zM183 170h1v1h-1z" fill="#1c78b8" fill-opacity="0.55"/><path d="M193 166h1v3h-1zM192 165h1v1h-1zM192 169h1v1h-1z" fill="#1c78b8"/><path d="M191 164h1v1h-1zM191 170h1v1h-1z" fill="#1c78b8" fill-opacity="0.55"/><path d="M201 166h1v3h-1zM200 165h1v1h-1zM200 169h1v1h-1z" fill="#1c78b8"/><path d="M199 164h1v1h-1zM199 170h1v1h-1z" fill="#1c78b8" fill-opacity="0.55"/><path d="M209 166h1v3h-1zM208 165h1v1h-1zM208 169h1v1h-1z" fill="#1c78b8"/><path d="M207 164h1v1h-1zM207 170h1v1h-1z" fill="#1c78b8" fill-opacity="0.55"/><path d="M217 166h1v3h-1zM216 165h1v1h-1zM216 169h1v1h-1z" fill="#1c78b8"/><path d="M215 164h1v1h-1zM215 170h1v1h-1z" fill="#1c78b8" fill-opacity="0.55"/><path d="M225 166h1v3h-1zM224 165h1v1h-1zM224 169h1v1h-1z" fill="#1c78b8"/><path d="M223 164h1v1h-1zM223 170h1v1h-1z" fill="#1c78b8" fill-opacity="0.55"/><path d="M233 166h1v3h-1zM232 165h1v1h-1zM232 169h1v1h-1z" fill="#1c78b8"/><path d="M231 164h1v1h-1zM231 170h1v1h-1z" fill="#1c78b8" fill-opacity="0.55"/><path d="M241 166h1v3h-1zM240 165h1v1h-1zM240 169h1v1h-1z" fill="#1c78b8"/><path d="M239 164h1v1h-1zM239 170h1v1h-1z" fill="#1c78b8" fill-opacity="0.55"/><path d="M249 166h1v3h-1zM248 165h1v1h-1zM248 169h1v1h-1z" fill="#1c78b8"/><path d="M247 164h1v1h-1zM247 170h1v1h-1z" fill="#1c78b8" fill-opacity="0.55"/><path d="M257 166h1v3h-1zM256 165h1v1h-1zM256 169h1v1h-1z" fill="#1c78b8"/><path d="M255 164h1v1h-1zM255 170h1v1h-1z" fill="#1c78b8" fill-opacity="0.55"/><path d="M265 166h1v3h-1zM264 165h1v1h-1zM264 169h1v1h-1z" fill="#1c78b8"/><path d="M263 164h1v1h-1zM263 170h1v1h-1z" fill="#1c78b8" fill-opacity="0.55"/><path d="M273 166h1v3h-1zM272 165h1v1h-1zM272 169h1v1h-1z" fill="#1c78b8"/><path d="M271 164h1v1h-1zM271 170h1v1h-1z" fill="#1c78b8" fill-opacity="0.55"/><path d="M281 166h1v3h-1zM280 165h1v1h-1zM280 169h1v1h-1z" fill="#1c78b8"/><path d="M279 164h1v1h-1zM279 170h1v1h-1z" fill="#1c78b8" fill-opacity="0.55"/><path d="M289 166h1v3h-1zM288 165h1v1h-1zM288 169h1v1h-1z" fill="#1c78b8"/><path d="M287 164h1v1h-1zM287 170h1v1h-1z" fill="#1c78b8" fill-opacity="0.55"/><path d="M297 166h1v3h-1zM296 165h1v1h-1zM296 169h1v1h-1z" fill="#1c78b8"/><path d="M295 164h1v1h-1zM295 170h1v1h-1z" fill="#1c78b8" fill-opacity="0.55"/><path d="M305 166h1v3h-1zM304 165h1v1h-1zM304 169h1v1h-1z" fill="#1c78b8"/><path d="M303 164h1v1h-1zM303 170h1v1h-1z" fill="#1c78b8" fill-opacity="0.55"/><path d="M313 166h1v3h-1zM312 165h1v1h-1zM312 169h1v1h-1z" fill="#1c78b8"/><path d="M311 164h1v1h-1zM311 170h1v1h-1z" fill="#1c78b8" fill-opacity="0.55"/><path d="M321 166h1v3h-1zM320 165h1v1h-1zM320 169h1v1h-1z" fill="#1c78b8"/><path d="M319 164h1v1h-1zM319 170h1v1h-1z" fill="#1c78b8" fill-opacity="0.55"/><path d="M329 166h1v3h-1zM328 165h1v1h-1zM328 169h1v1h-1z" fill="#1c78b8"/><path d="M327 164h1v1h-1zM327 170h1v1h-1z" fill="#1c78b8" fill-opacity="0.55"/><path d="M337 166h1v3h-1zM336 165h1v1h-1zM336 169h1v1h-1z" fill="#1c78b8"/><path d="M335 164h1v1h-1zM335 170h1v1h-1z" fill="#1c78b8" fill-opacity="0.55"/><path d="M345 166h1v3h-1zM344 165h1v1h-1zM344 169h1v1h-1z" fill="#1c78b8"/><path d="M343 164h1v1h-1zM343 170h1v1h-1z" fill="#1c78b8" fill-opacity="0.55"/><path d="M353 166h1v3h-1zM352 165h1v1h-1zM352 169h1v1h-1z" fill="#1c78b8"/><path d="M351 164h1v1h-1zM351 170h1v1h-1z" fill="#1c78b8" fill-opacity="0.55"/><path d="M361 166h1v3h-1zM360 165h1v1h-1zM360 169h1v1h-1z" fill="#1c78b8"/><path d="M359 164h1v1h-1zM359 170h1v1h-1z" fill="#1c78b8" fill-opacity="0.55"/><path d="M369 166h1v3h-1zM368 165h1v1h-1zM368 169h1v1h-1z" fill="#1c78b8"/><path d="M367 164h1v1h-1zM367 170h1v1h-1z" fill="#1c78b8" fill-opacity="0.55"/><path d="M377 166h1v3h-1zM376 165h1v1h-1zM376 169h1v1h-1z" fill="#1c78b8"/><path d="M375 164h1v1h-1zM375 170h1v1h-1z" fill="#1c78b8" fill-opacity="0.55"/><path d="M385 166h1v3h-1zM384 165h1v1h-1zM384 169h1v1h-1z" fill="#1c78b8"/><path d="M383 164h1v1h-1zM383 170h1v1h-1z" fill="#1c78b8" fill-opacity="0.55"/><path d="M393 166h1v3h-1zM392 165h1v1h-1zM392 169h1v1h-1z" fill="#1c78b8"/><path d="M391 164h1v1h-1zM391 170h1v1h-1z" fill="#1c78b8" fill-opacity="0.55"/><path d="M401 166h1v3h-1zM400 165h1v1h-1zM400 169h1v1h-1z" fill="#1c78b8"/><path d="M399 164h1v1h-1zM399 170h1v1h-1z" fill="#1c78b8" fill-opacity="0.55"/><path d="M409 166h1v3h-1zM408 165h1v1h-1zM408 169h1v1h-1z" fill="#1c78b8"/><path d="M407 164h1v1h-1zM407 170h1v1h-1z" fill="#1c78b8" fill-opacity="0.55"/><path d="M417 166h1v3h-1zM416 165h1v1h-1zM416 169h1v1h-1z" fill="#1c78b8"/><path d="M415 164h1v1h-1zM415 170h1v1h-1z" fill="#1c78b8" fill-opacity="0.55"/><path d="M425 166h1v3h-1zM424 165h1v1h-1zM424 169h1v1h-1z" fill="#1c78b8"/><path d="M423 164h1v1h-1zM423 170h1v1h-1z" fill="#1c78b8" fill-opacity="0.55"/><path d="M433 166h1v3h-1zM432 165h1v1h-1zM432 169h1v1h-1z" fill="#1c78b8"/><path d="M431 164h1v1h-1zM431 170h1v1h-1z" fill="#1c78b8" fill-opacity="0.55"/><path d="M441 166h1v3h-1zM440 165h1v1h-1zM440 169h1v1h-1z" fill="#1c78b8"/><path d="M439 164h1v1h-1zM439 170h1v1h-1z" fill="#1c78b8" fill-opacity="0.55"/><path d="M449 166h1v3h-1zM448 165h1v1h-1zM448 169h1v1h-1z" fill="#1c78b8"/><path d="M447 164h1v1h-1zM447 170h1v1h-1z" fill="#1c78b8" fill-opacity="0.55"/><path d="M457 166h1v3h-1zM456 165h1v1h-1zM456 169h1v1h-1z" fill="#1c78b8"/><path d="M455 164h1v1h-1zM455 170h1v1h-1z" fill="#1c78b8" fill-opacity="0.55"/><path d="M465 166h1v3h-1zM464 165h1v1h-1zM464 169h1v1h-1z" fill="#1c78b8"/><path d="M463 164h1v1h-1zM463 170h1v1h-1z" fill="#1c78b8" fill-opacity="0.55"/><path d="M473 166h1v3h-1zM472 165h1v1h-1zM472 169h1v1h-1z" fill="#1c78b8"/><path d="M471 164h1v1h-1zM471 170h1v1h-1z" fill="#1c78b8" fill-opacity="0.55"/><path d="M481 166h1v3h-1zM480 165h1v1h-1zM480 169h1v1h-1z" fill="#1c78b8"/><path d="M479 164h1v1h-1zM479 170h1v1h-1z" fill="#1c78b8" fill-opacity="0.55"/><path d="M489 166h1v3h-1zM488 165h1v1h-1zM488 169h1v1h-1z" fill="#1c78b8"/><path d="M487 164h1v1h-1zM487 170h1v1h-1z" fill="#1c78b8" fill-opacity="0.55"/><path d="M497 166h1v3h-1zM496 165h1v1h-1zM496 169h1v1h-1z" fill="#1c78b8"/><path d="M495 164h1v1h-1zM495 170h1v1h-1z" fill="#1c78b8" fill-opacity="0.55"/><path d="M505 166h1v3h-1zM504 165h1v1h-1zM504 169h1v1h-1z" fill="#1c78b8"/><path d="M503 164h1v1h-1zM503 170h1v1h-1z" fill="#1c78b8" fill-opacity="0.55"/><path d="M513 166h1v3h-1zM512 165h1v1h-1zM512 169h1v1h-1z" fill="#1c78b8"/><path d="M511 164h1v1h-1zM511 170h1v1h-1z" fill="#1c78b8" fill-opacity="0.55"/><path d="M521 166h1v3h-1zM520 165h1v1h-1zM520 169h1v1h-1z" fill="#1c78b8"/><path d="M519 164h1v1h-1zM519 170h1v1h-1z" fill="#1c78b8" fill-opacity="0.55"/><path d="M529 166h1v3h-1zM528 165h1v1h-1zM528 169h1v1h-1z" fill="#1c78b8"/><path d="M527 164h1v1h-1zM527 170h1v1h-1z" fill="#1c78b8" fill-opacity="0.55"/><path d="M537 166h1v3h-1zM536 165h1v1h-1zM536 169h1v1h-1z" fill="#1c78b8"/><path d="M535 164h1v1h-1zM535 170h1v1h-1z" fill="#1c78b8" fill-opacity="0.55"/><path d="M545 166h1v3h-1zM544 165h1v1h-1zM544 169h1v1h-1z" fill="#1c78b8"/><path d="M543 164h1v1h-1zM543 170h1v1h-1z" fill="#1c78b8" fill-opacity="0.55"/><path d="M553 166h1v3h-1zM552 165h1v1h-1zM552 169h1v1h-1z" fill="#1c78b8"/><path d="M551 164h1v1h-1zM551 170h1v1h-1z" fill="#1c78b8" fill-opacity="0.55"/><path d="M561 166h1v3h-1zM560 165h1v1h-1zM560 169h1v1h-1z" fill="#1c78b8"/><path d="M559 164h1v1h-1zM559 170h1v1h-1z" fill="#1c78b8" fill-opacity="0.55"/><path d="M569 166h1v3h-1zM568 165h1v1h-1zM568 169h1v1h-1z" fill="#1c78b8"/><path d="M567 164h1v1h-1zM567 170h1v1h-1z" fill="#1c78b8" fill-opacity="0.55"/><path d="M577 166h1v3h-1zM576 165h1v1h-1zM576 169h1v1h-1z" fill="#1c78b8"/><path d="M575 164h1v1h-1zM575 170h1v1h-1z" fill="#1c78b8" fill-opacity="0.55"/><path d="M585 166h1v3h-1zM584 165h1v1h-1zM584 169h1v1h-1z" fill="#1c78b8"/><path d="M583 164h1v1h-1zM583 170h1v1h-1z" fill="#1c78b8" fill-opacity="0.55"/><path d="M593 166h1v3h-1zM592 165h1v1h-1zM592 169h1v1h-1z" fill="#1c78b8"/><path d="M591 164h1v1h-1zM591 170h1v1h-1z" fill="#1c78b8" fill-opacity="0.55"/><path d="M601 166h1v3h-1zM600 165h1v1h-1zM600 169h1v1h-1z" fill="#1c78b8"/><path d="M599 164h1v1h-1zM599 170h1v1h-1z" fill="#1c78b8" fill-opacity="0.55"/><path d="M609 166h1v3h-1zM608 165h1v1h-1zM608 169h1v1h-1z" fill="#1c78b8"/><path d="M607 164h1v1h-1zM607 170h1v1h-1z" fill="#1c78b8" fill-opacity="0.55"/><path d="M617 166h1v3h-1zM616 165h1v1h-1zM616 169h1v1h-1z" fill="#1c78b8"/><path d="M615 164h1v1h-1zM615 170h1v1h-1z" fill="#1c78b8" fill-opacity="0.55"/><path d="M625 166h1v3h-1zM624 165h1v1h-1zM624 169h1v1h-1z" fill="#1c78b8"/><path d="M623 164h1v1h-1zM623 170h1v1h-1z" fill="#1c78b8" fill-opacity="0.55"/><path d="M633 166h1v3h-1zM632 165h1v1h-1zM632 169h1v1h-1z" fill="#1c78b8"/><path d="M631 164h1v1h-1zM631 170h1v1h-1z" fill="#1c78b8" fill-opacity="0.55"/><path d="M641 166h1v3h-1zM640 165h1v1h-1zM640 169h1v1h-1z" fill="#1c78b8"/><path d="M639 164h1v1h-1zM639 170h1v1h-1z" fill="#1c78b8" fill-opacity="0.55"/><path d="M649 166h1v3h-1zM648 165h1v1h-1zM648 169h1v1h-1z" fill="#1c78b8"/><path d="M647 164h1v1h-1zM647 170h1v1h-1z" fill="#1c78b8" fill-opacity="0.55"/><path d="M657 166h1v3h-1zM656 165h1v1h-1zM656 169h1v1h-1z" fill="#1c78b8"/><path d="M655 164h1v1h-1zM655 170h1v1h-1z" fill="#1c78b8" fill-opacity="0.55"/><path d="M665 166h1v3h-1zM664 165h1v1h-1zM664 169h1v1h-1z" fill="#1c78b8"/><path d="M663 164h1v1h-1zM663 170h1v1h-1z" fill="#1c78b8" fill-opacity="0.55"/><path d="M673 166h1v3h-1zM672 165h1v1h-1zM672 169h1v1h-1z" fill="#1c78b8"/><path d="M671 164h1v1h-1zM671 170h1v1h-1z" fill="#1c78b8" fill-opacity="0.55"/><path d="M681 166h1v3h-1zM680 165h1v1h-1zM680 169h1v1h-1z" fill="#1c78b8"/><path d="M679 164h1v1h-1zM679 170h1v1h-1z" fill="#1c78b8" fill-opacity="0.55"/><path d="M689 166h1v3h-1zM688 165h1v1h-1zM688 169h1v1h-1z" fill="#1c78b8"/><path d="M687 164h1v1h-1zM687 170h1v1h-1z" fill="#1c78b8" fill-opacity="0.55"/><path d="M697 166h1v3h-1zM696 165h1v1h-1zM696 169h1v1h-1z" fill="#1c78b8"/><path d="M695 164h1v1h-1zM695 170h1v1h-1z" fill="#1c78b8" fill-opacity="0.55"/><path d="M705 166h1v3h-1zM704 165h1v1h-1zM704 169h1v1h-1z" fill="#1c78b8"/><path d="M703 164h1v1h-1zM703 170h1v1h-1z" fill="#1c78b8" fill-opacity="0.55"/><path d="M713 166h1v3h-1zM712 165h1v1h-1zM712 169h1v1h-1z" fill="#1c78b8"/><path d="M711 164h1v1h-1zM711 170h1v1h-1z" fill="#1c78b8" fill-opacity="0.55"/><path d="M721 166h1v3h-1zM720 165h1v1h-1zM720 169h1v1h-1z" fill="#1c78b8"/><path d="M719 164h1v1h-1zM719 170h1v1h-1z" fill="#1c78b8" fill-opacity="0.55"/><path d="M729 166h1v3h-1zM728 165h1v1h-1zM728 169h1v1h-1z" fill="#1c78b8"/><path d="M727 164h1v1h-1zM727 170h1v1h-1z" fill="#1c78b8" fill-opacity="0.55"/><path d="M737 166h1v3h-1zM736 165h1v1h-1zM736 169h1v1h-1z" fill="#1c78b8"/><path d="M735 164h1v1h-1zM735 170h1v1h-1z" fill="#1c78b8" fill-opacity="0.55"/><path d="M745 166h1v3h-1zM744 165h1v1h-1zM744 169h1v1h-1z" fill="#1c78b8"/><path d="M743 164h1v1h-1zM743 170h1v1h-1z" fill="#1c78b8" fill-opacity="0.55"/><path d="M753 166h1v3h-1zM752 165h1v1h-1zM752 169h1v1h-1z" fill="#1c78b8"/><path d="M751 164h1v1h-1zM751 170h1v1h-1z" fill="#1c78b8" fill-opacity="0.55"/><path d="M761 166h1v3h-1zM760 165h1v1h-1zM760 169h1v1h-1z" fill="#1c78b8"/><path d="M759 164h1v1h-1zM759 170h1v1h-1z" fill="#1c78b8" fill-opacity="0.55"/><path d="M769 166h1v3h-1zM768 165h1v1h-1zM768 169h1v1h-1z" fill="#1c78b8"/><path d="M767 164h1v1h-1zM767 170h1v1h-1z" fill="#1c78b8" fill-opacity="0.55"/><path d="M777 166h1v3h-1zM776 165h1v1h-1zM776 169h1v1h-1z" fill="#1c78b8"/><path d="M775 164h1v1h-1zM775 170h1v1h-1z" fill="#1c78b8" fill-opacity="0.55"/><path d="M785 166h1v3h-1zM784 165h1v1h-1zM784 169h1v1h-1z" fill="#1c78b8"/><path d="M783 164h1v1h-1zM783 170h1v1h-1z" fill="#1c78b8" fill-opacity="0.55"/><path d="M793 166h1v3h-1zM792 165h1v1h-1zM792 169h1v1h-1z" fill="#1c78b8"/><path d="M791 164h1v1h-1zM791 170h1v1h-1z" fill="#1c78b8" fill-opacity="0.55"/><path d="M801 166h1v3h-1zM800 165h1v1h-1zM800 169h1v1h-1z" fill="#1c78b8"/><path d="M799 164h1v1h-1zM799 170h1v1h-1z" fill="#1c78b8" fill-opacity="0.55"/><path d="M809 166h1v3h-1zM808 165h1v1h-1zM808 169h1v1h-1z" fill="#1c78b8"/><path d="M807 164h1v1h-1zM807 170h1v1h-1z" fill="#1c78b8" fill-opacity="0.55"/><path d="M817 166h1v3h-1zM816 165h1v1h-1zM816 169h1v1h-1z" fill="#1c78b8"/><path d="M815 164h1v1h-1zM815 170h1v1h-1z" fill="#1c78b8" fill-opacity="0.55"/><path d="M825 166h1v3h-1zM824 165h1v1h-1zM824 169h1v1h-1z" fill="#1c78b8"/><path d="M823 164h1v1h-1zM823 170h1v1h-1z" fill="#1c78b8" fill-opacity="0.55"/><path d="M833 166h1v3h-1zM832 165h1v1h-1zM832 169h1v1h-1z" fill="#1c78b8"/><path d="M831 164h1v1h-1zM831 170h1v1h-1z" fill="#1c78b8" fill-opacity="0.55"/><path d="M841 166h1v3h-1zM840 165h1v1h-1zM840 169h1v1h-1z" fill="#1c78b8"/><path d="M839 164h1v1h-1zM839 170h1v1h-1z" fill="#1c78b8" fill-opacity="0.55"/><path d="M849 166h1v3h-1zM848 165h1v1h-1zM848 169h1v1h-1z" fill="#1c78b8"/><path d="M847 164h1v1h-1zM847 170h1v1h-1z" fill="#1c78b8" fill-opacity="0.55"/><path d="M857 166h1v3h-1zM856 165h1v1h-1zM856 169h1v1h-1z" fill="#1c78b8"/><path d="M855 164h1v1h-1zM855 170h1v1h-1z" fill="#1c78b8" fill-opacity="0.55"/><path d="M865 166h1v3h-1zM864 165h1v1h-1zM864 169h1v1h-1z" fill="#1c78b8"/><path d="M863 164h1v1h-1zM863 170h1v1h-1z" fill="#1c78b8" fill-opacity="0.55"/><path d="M873 166h1v3h-1zM872 165h1v1h-1zM872 169h1v1h-1z" fill="#1c78b8"/><path d="M871 164h1v1h-1zM871 170h1v1h-1z" fill="#1c78b8" fill-opacity="0.55"/><path d="M881 166h1v3h-1zM880 165h1v1h-1zM880 169h1v1h-1z" fill="#1c78b8"/><path d="M879 164h1v1h-1zM879 170h1v1h-1z" fill="#1c78b8" fill-opacity="0.55"/><path d="M889 166h1v3h-1zM888 165h1v1h-1zM888 169h1v1h-1z" fill="#1c78b8"/><path d="M887 164h1v1h-1zM887 170h1v1h-1z" fill="#1c78b8" fill-opacity="0.55"/><path d="M897 166h1v3h-1zM896 165h1v1h-1zM896 169h1v1h-1z" fill="#1c78b8"/><path d="M895 164h1v1h-1zM895 170h1v1h-1z" fill="#1c78b8" fill-opacity="0.55"/><path d="M905 166h1v3h-1zM904 165h1v1h-1zM904 169h1v1h-1z" fill="#1c78b8"/><path d="M903 164h1v1h-1zM903 170h1v1h-1z" fill="#1c78b8" fill-opacity="0.55"/><path d="M913 166h1v3h-1zM912 165h1v1h-1zM912 169h1v1h-1z" fill="#1c78b8"/><path d="M911 164h1v1h-1zM911 170h1v1h-1z" fill="#1c78b8" fill-opacity="0.55"/><path d="M921 166h1v3h-1zM920 165h1v1h-1zM920 169h1v1h-1z" fill="#1c78b8"/><path d="M919 164h1v1h-1zM919 170h1v1h-1z" fill="#1c78b8" fill-opacity="0.55"/><path d="M929 166h1v3h-1zM928 165h1v1h-1zM928 169h1v1h-1z" fill="#1c78b8"/><path d="M927 164h1v1h-1zM927 170h1v1h-1z" fill="#1c78b8" fill-opacity="0.55"/><path d="M937 166h1v3h-1zM936 165h1v1h-1zM936 169h1v1h-1z" fill="#1c78b8"/><path d="M935 164h1v1h-1zM935 170h1v1h-1z" fill="#1c78b8" fill-opacity="0.55"/><path d="M945 166h1v3h-1zM944 165h1v1h-1zM944 169h1v1h-1z" fill="#1c78b8"/><path d="M943 164h1v1h-1zM943 170h1v1h-1z" fill="#1c78b8" fill-opacity="0.55"/>
<rect x="157" y="183" width="792" height="1" fill="#0c0c78"/><path d="M161 182h1v3h-1zM160 181h1v1h-1zM160 185h1v1h-1z" fill="#0c0c78"/><path d="M159 180h1v1h-1zM159 186h1v1h-1z" fill="#0c0c78" fill-opacity="0.55"/><path d="M169 182h1v3h-1zM168 181h1v1h-1zM168 185h1v1h-1z" fill="#0c0c78"/><path d="M167 180h1v1h-1zM167 186h1v1h-1z" fill="#0c0c78" fill-opacity="0.55"/><path d="M177 182h1v3h-1zM176 181h1v1h-1zM176 185h1v1h-1z" fill="#0c0c78"/><path d="M175 180h1v1h-1zM175 186h1v1h-1z" fill="#0c0c78" fill-opacity="0.55"/><path d="M185 182h1v3h-1zM184 181h1v1h-1zM184 185h1v1h-1z" fill="#0c0c78"/><path d="M183 180h1v1h-1zM183 186h1v1h-1z" fill="#0c0c78" fill-opacity="0.55"/><path d="M193 182h1v3h-1zM192 181h1v1h-1zM192 185h1v1h-1z" fill="#0c0c78"/><path d="M191 180h1v1h-1zM191 186h1v1h-1z" fill="#0c0c78" fill-opacity="0.55"/><path d="M201 182h1v3h-1zM200 181h1v1h-1zM200 185h1v1h-1z" fill="#0c0c78"/><path d="M199 180h1v1h-1zM199 186h1v1h-1z" fill="#0c0c78" fill-opacity="0.55"/><path d="M209 182h1v3h-1zM208 181h1v1h-1zM208 185h1v1h-1z" fill="#0c0c78"/><path d="M207 180h1v1h-1zM207 186h1v1h-1z" fill="#0c0c78" fill-opacity="0.55"/><path d="M217 182h1v3h-1zM216 181h1v1h-1zM216 185h1v1h-1z" fill="#0c0c78"/><path d="M215 180h1v1h-1zM215 186h1v1h-1z" fill="#0c0c78" fill-opacity="0.55"/><path d="M225 182h1v3h-1zM224 181h1v1h-1zM224 185h1v1h-1z" fill="#0c0c78"/><path d="M223 180h1v1h-1zM223 186h1v1h-1z" fill="#0c0c78" fill-opacity="0.55"/><path d="M233 182h1v3h-1zM232 181h1v1h-1zM232 185h1v1h-1z" fill="#0c0c78"/><path d="M231 180h1v1h-1zM231 186h1v1h-1z" fill="#0c0c78" fill-opacity="0.55"/><path d="M241 182h1v3h-1zM240 181h1v1h-1zM240 185h1v1h-1z" fill="#0c0c78"/><path d="M239 180h1v1h-1zM239 186h1v1h-1z" fill="#0c0c78" fill-opacity="0.55"/><path d="M249 182h1v3h-1zM248 181h1v1h-1zM248 185h1v1h-1z" fill="#0c0c78"/><path d="M247 180h1v1h-1zM247 186h1v1h-1z" fill="#0c0c78" fill-opacity="0.55"/><path d="M257 182h1v3h-1zM256 181h1v1h-1zM256 185h1v1h-1z" fill="#0c0c78"/><path d="M255 180h1v1h-1zM255 186h1v1h-1z" fill="#0c0c78" fill-opacity="0.55"/><path d="M265 182h1v3h-1zM264 181h1v1h-1zM264 185h1v1h-1z" fill="#0c0c78"/><path d="M263 180h1v1h-1zM263 186h1v1h-1z" fill="#0c0c78" fill-opacity="0.55"/><path d="M273 182h1v3h-1zM272 181h1v1h-1zM272 185h1v1h-1z" fill="#0c0c78"/><path d="M271 180h1v1h-1zM271 186h1v1h-1z" fill="#0c0c78" fill-opacity="0.55"/><path d="M281 182h1v3h-1zM280 181h1v1h-1zM280 185h1v1h-1z" fill="#0c0c78"/><path d="M279 180h1v1h-1zM279 186h1v1h-1z" fill="#0c0c78" fill-opacity="0.55"/><path d="M289 182h1v3h-1zM288 181h1v1h-1zM288 185h1v1h-1z" fill="#0c0c78"/><path d="M287 180h1v1h-1zM287 186h1v1h-1z" fill="#0c0c78" fill-opacity="0.55"/><path d="M297 182h1v3h-1zM296 181h1v1h-1zM296 185h1v1h-1z" fill="#0c0c78"/><path d="M295 180h1v1h-1zM295 186h1v1h-1z" fill="#0c0c78" fill-opacity="0.55"/><path d="M305 182h1v3h-1zM304 181h1v1h-1zM304 185h1v1h-1z" fill="#0c0c78"/><path d="M303 180h1v1h-1zM303 186h1v1h-1z" fill="#0c0c78" fill-opacity="0.55"/><path d="M313 182h1v3h-1zM312 181h1v1h-1zM312 185h1v1h-1z" fill="#0c0c78"/><path d="M311 180h1v1h-1zM311 186h1v1h-1z" fill="#0c0c78" fill-opacity="0.55"/><path d="M321 182h1v3h-1zM320 181h1v1h-1zM320 185h1v1h-1z" fill="#0c0c78"/><path d="M319 180h1v1h-1zM319 186h1v1h-1z" fill="#0c0c78" fill-opacity="0.55"/><path d="M329 182h1v3h-1zM328 181h1v1h-1zM328 185h1v1h-1z" fill="#0c0c78"/><path d="M327 180h1v1h-1zM327 186h1v1h-1z" fill="#0c0c78" fill-opacity="0.55"/><path d="M337 182h1v3h-1zM336 181h1v1h-1zM336 185h1v1h-1z" fill="#0c0c78"/><path d="M335 180h1v1h-1zM335 186h1v1h-1z" fill="#0c0c78" fill-opacity="0.55"/><path d="M345 182h1v3h-1zM344 181h1v1h-1zM344 185h1v1h-1z" fill="#0c0c78"/><path d="M343 180h1v1h-1zM343 186h1v1h-1z" fill="#0c0c78" fill-opacity="0.55"/><path d="M353 182h1v3h-1zM352 181h1v1h-1zM352 185h1v1h-1z" fill="#0c0c78"/><path d="M351 180h1v1h-1zM351 186h1v1h-1z" fill="#0c0c78" fill-opacity="0.55"/><path d="M361 182h1v3h-1zM360 181h1v1h-1zM360 185h1v1h-1z" fill="#0c0c78"/><path d="M359 180h1v1h-1zM359 186h1v1h-1z" fill="#0c0c78" fill-opacity="0.55"/><path d="M369 182h1v3h-1zM368 181h1v1h-1zM368 185h1v1h-1z" fill="#0c0c78"/><path d="M367 180h1v1h-1zM367 186h1v1h-1z" fill="#0c0c78" fill-opacity="0.55"/><path d="M377 182h1v3h-1zM376 181h1v1h-1zM376 185h1v1h-1z" fill="#0c0c78"/><path d="M375 180h1v1h-1zM375 186h1v1h-1z" fill="#0c0c78" fill-opacity="0.55"/><path d="M385 182h1v3h-1zM384 181h1v1h-1zM384 185h1v1h-1z" fill="#0c0c78"/><path d="M383 180h1v1h-1zM383 186h1v1h-1z" fill="#0c0c78" fill-opacity="0.55"/><path d="M393 182h1v3h-1zM392 181h1v1h-1zM392 185h1v1h-1z" fill="#0c0c78"/><path d="M391 180h1v1h-1zM391 186h1v1h-1z" fill="#0c0c78" fill-opacity="0.55"/><path d="M401 182h1v3h-1zM400 181h1v1h-1zM400 185h1v1h-1z" fill="#0c0c78"/><path d="M399 180h1v1h-1zM399 186h1v1h-1z" fill="#0c0c78" fill-opacity="0.55"/><path d="M409 182h1v3h-1zM408 181h1v1h-1zM408 185h1v1h-1z" fill="#0c0c78"/><path d="M407 180h1v1h-1zM407 186h1v1h-1z" fill="#0c0c78" fill-opacity="0.55"/><path d="M417 182h1v3h-1zM416 181h1v1h-1zM416 185h1v1h-1z" fill="#0c0c78"/><path d="M415 180h1v1h-1zM415 186h1v1h-1z" fill="#0c0c78" fill-opacity="0.55"/><path d="M425 182h1v3h-1zM424 181h1v1h-1zM424 185h1v1h-1z" fill="#0c0c78"/><path d="M423 180h1v1h-1zM423 186h1v1h-1z" fill="#0c0c78" fill-opacity="0.55"/><path d="M433 182h1v3h-1zM432 181h1v1h-1zM432 185h1v1h-1z" fill="#0c0c78"/><path d="M431 180h1v1h-1zM431 186h1v1h-1z" fill="#0c0c78" fill-opacity="0.55"/><path d="M441 182h1v3h-1zM440 181h1v1h-1zM440 185h1v1h-1z" fill="#0c0c78"/><path d="M439 180h1v1h-1zM439 186h1v1h-1z" fill="#0c0c78" fill-opacity="0.55"/><path d="M449 182h1v3h-1zM448 181h1v1h-1zM448 185h1v1h-1z" fill="#0c0c78"/><path d="M447 180h1v1h-1zM447 186h1v1h-1z" fill="#0c0c78" fill-opacity="0.55"/><path d="M457 182h1v3h-1zM456 181h1v1h-1zM456 185h1v1h-1z" fill="#0c0c78"/><path d="M455 180h1v1h-1zM455 186h1v1h-1z" fill="#0c0c78" fill-opacity="0.55"/><path d="M465 182h1v3h-1zM464 181h1v1h-1zM464 185h1v1h-1z" fill="#0c0c78"/><path d="M463 180h1v1h-1zM463 186h1v1h-1z" fill="#0c0c78" fill-opacity="0.55"/><path d="M473 182h1v3h-1zM472 181h1v1h-1zM472 185h1v1h-1z" fill="#0c0c78"/><path d="M471 180h1v1h-1zM471 186h1v1h-1z" fill="#0c0c78" fill-opacity="0.55"/><path d="M481 182h1v3h-1zM480 181h1v1h-1zM480 185h1v1h-1z" fill="#0c0c78"/><path d="M479 180h1v1h-1zM479 186h1v1h-1z" fill="#0c0c78" fill-opacity="0.55"/><path d="M489 182h1v3h-1zM488 181h1v1h-1zM488 185h1v1h-1z" fill="#0c0c78"/><path d="M487 180h1v1h-1zM487 186h1v1h-1z" fill="#0c0c78" fill-opacity="0.55"/><path d="M497 182h1v3h-1zM496 181h1v1h-1zM496 185h1v1h-1z" fill="#0c0c78"/><path d="M495 180h1v1h-1zM495 186h1v1h-1z" fill="#0c0c78" fill-opacity="0.55"/><path d="M505 182h1v3h-1zM504 181h1v1h-1zM504 185h1v1h-1z" fill="#0c0c78"/><path d="M503 180h1v1h-1zM503 186h1v1h-1z" fill="#0c0c78" fill-opacity="0.55"/><path d="M513 182h1v3h-1zM512 181h1v1h-1zM512 185h1v1h-1z" fill="#0c0c78"/><path d="M511 180h1v1h-1zM511 186h1v1h-1z" fill="#0c0c78" fill-opacity="0.55"/><path d="M521 182h1v3h-1zM520 181h1v1h-1zM520 185h1v1h-1z" fill="#0c0c78"/><path d="M519 180h1v1h-1zM519 186h1v1h-1z" fill="#0c0c78" fill-opacity="0.55"/><path d="M529 182h1v3h-1zM528 181h1v1h-1zM528 185h1v1h-1z" fill="#0c0c78"/><path d="M527 180h1v1h-1zM527 186h1v1h-1z" fill="#0c0c78" fill-opacity="0.55"/><path d="M537 182h1v3h-1zM536 181h1v1h-1zM536 185h1v1h-1z" fill="#0c0c78"/><path d="M535 180h1v1h-1zM535 186h1v1h-1z" fill="#0c0c78" fill-opacity="0.55"/><path d="M545 182h1v3h-1zM544 181h1v1h-1zM544 185h1v1h-1z" fill="#0c0c78"/><path d="M543 180h1v1h-1zM543 186h1v1h-1z" fill="#0c0c78" fill-opacity="0.55"/><path d="M553 182h1v3h-1zM552 181h1v1h-1zM552 185h1v1h-1z" fill="#0c0c78"/><path d="M551 180h1v1h-1zM551 186h1v1h-1z" fill="#0c0c78" fill-opacity="0.55"/><path d="M561 182h1v3h-1zM560 181h1v1h-1zM560 185h1v1h-1z" fill="#0c0c78"/><path d="M559 180h1v1h-1zM559 186h1v1h-1z" fill="#0c0c78" fill-opacity="0.55"/><path d="M569 182h1v3h-1zM568 181h1v1h-1zM568 185h1v1h-1z" fill="#0c0c78"/><path d="M567 180h1v1h-1zM567 186h1v1h-1z" fill="#0c0c78" fill-opacity="0.55"/><path d="M577 182h1v3h-1zM576 181h1v1h-1zM576 185h1v1h-1z" fill="#0c0c78"/><path d="M575 180h1v1h-1zM575 186h1v1h-1z" fill="#0c0c78" fill-opacity="0.55"/><path d="M585 182h1v3h-1zM584 181h1v1h-1zM584 185h1v1h-1z" fill="#0c0c78"/><path d="M583 180h1v1h-1zM583 186h1v1h-1z" fill="#0c0c78" fill-opacity="0.55"/><path d="M593 182h1v3h-1zM592 181h1v1h-1zM592 185h1v1h-1z" fill="#0c0c78"/><path d="M591 180h1v1h-1zM591 186h1v1h-1z" fill="#0c0c78" fill-opacity="0.55"/><path d="M601 182h1v3h-1zM600 181h1v1h-1zM600 185h1v1h-1z" fill="#0c0c78"/><path d="M599 180h1v1h-1zM599 186h1v1h-1z" fill="#0c0c78" fill-opacity="0.55"/><path d="M609 182h1v3h-1zM608 181h1v1h-1zM608 185h1v1h-1z" fill="#0c0c78"/><path d="M607 180h1v1h-1zM607 186h1v1h-1z" fill="#0c0c78" fill-opacity="0.55"/><path d="M617 182h1v3h-1zM616 181h1v1h-1zM616 185h1v1h-1z" fill="#0c0c78"/><path d="M615 180h1v1h-1zM615 186h1v1h-1z" fill="#0c0c78" fill-opacity="0.55"/><path d="M625 182h1v3h-1zM624 181h1v1h-1zM624 185h1v1h-1z" fill="#0c0c78"/><path d="M623 180h1v1h-1zM623 186h1v1h-1z" fill="#0c0c78" fill-opacity="0.55"/><path d="M633 182h1v3h-1zM632 181h1v1h-1zM632 185h1v1h-1z" fill="#0c0c78"/><path d="M631 180h1v1h-1zM631 186h1v1h-1z" fill="#0c0c78" fill-opacity="0.55"/><path d="M641 182h1v3h-1zM640 181h1v1h-1zM640 185h1v1h-1z" fill="#0c0c78"/><path d="M639 180h1v1h-1zM639 186h1v1h-1z" fill="#0c0c78" fill-opacity="0.55"/><path d="M649 182h1v3h-1zM648 181h1v1h-1zM648 185h1v1h-1z" fill="#0c0c78"/><path d="M647 180h1v1h-1zM647 186h1v1h-1z" fill="#0c0c78" fill-opacity="0.55"/><path d="M657 182h1v3h-1zM656 181h1v1h-1zM656 185h1v1h-1z" fill="#0c0c78"/><path d="M655 180h1v1h-1zM655 186h1v1h-1z" fill="#0c0c78" fill-opacity="0.55"/><path d="M665 182h1v3h-1zM664 181h1v1h-1zM664 185h1v1h-1z" fill="#0c0c78"/><path d="M663 180h1v1h-1zM663 186h1v1h-1z" fill="#0c0c78" fill-opacity="0.55"/><path d="M673 182h1v3h-1zM672 181h1v1h-1zM672 185h1v1h-1z" fill="#0c0c78"/><path d="M671 180h1v1h-1zM671 186h1v1h-1z" fill="#0c0c78" fill-opacity="0.55"/><path d="M681 182h1v3h-1zM680 181h1v1h-1zM680 185h1v1h-1z" fill="#0c0c78"/><path d="M679 180h1v1h-1zM679 186h1v1h-1z" fill="#0c0c78" fill-opacity="0.55"/><path d="M689 182h1v3h-1zM688 181h1v1h-1zM688 185h1v1h-1z" fill="#0c0c78"/><path d="M687 180h1v1h-1zM687 186h1v1h-1z" fill="#0c0c78" fill-opacity="0.55"/><path d="M697 182h1v3h-1zM696 181h1v1h-1zM696 185h1v1h-1z" fill="#0c0c78"/><path d="M695 180h1v1h-1zM695 186h1v1h-1z" fill="#0c0c78" fill-opacity="0.55"/><path d="M705 182h1v3h-1zM704 181h1v1h-1zM704 185h1v1h-1z" fill="#0c0c78"/><path d="M703 180h1v1h-1zM703 186h1v1h-1z" fill="#0c0c78" fill-opacity="0.55"/><path d="M713 182h1v3h-1zM712 181h1v1h-1zM712 185h1v1h-1z" fill="#0c0c78"/><path d="M711 180h1v1h-1zM711 186h1v1h-1z" fill="#0c0c78" fill-opacity="0.55"/><path d="M721 182h1v3h-1zM720 181h1v1h-1zM720 185h1v1h-1z" fill="#0c0c78"/><path d="M719 180h1v1h-1zM719 186h1v1h-1z" fill="#0c0c78" fill-opacity="0.55"/><path d="M729 182h1v3h-1zM728 181h1v1h-1zM728 185h1v1h-1z" fill="#0c0c78"/><path d="M727 180h1v1h-1zM727 186h1v1h-1z" fill="#0c0c78" fill-opacity="0.55"/><path d="M737 182h1v3h-1zM736 181h1v1h-1zM736 185h1v1h-1z" fill="#0c0c78"/><path d="M735 180h1v1h-1zM735 186h1v1h-1z" fill="#0c0c78" fill-opacity="0.55"/><path d="M745 182h1v3h-1zM744 181h1v1h-1zM744 185h1v1h-1z" fill="#0c0c78"/><path d="M743 180h1v1h-1zM743 186h1v1h-1z" fill="#0c0c78" fill-opacity="0.55"/><path d="M753 182h1v3h-1zM752 181h1v1h-1zM752 185h1v1h-1z" fill="#0c0c78"/><path d="M751 180h1v1h-1zM751 186h1v1h-1z" fill="#0c0c78" fill-opacity="0.55"/><path d="M761 182h1v3h-1zM760 181h1v1h-1zM760 185h1v1h-1z" fill="#0c0c78"/><path d="M759 180h1v1h-1zM759 186h1v1h-1z" fill="#0c0c78" fill-opacity="0.55"/><path d="M769 182h1v3h-1zM768 181h1v1h-1zM768 185h1v1h-1z" fill="#0c0c78"/><path d="M767 180h1v1h-1zM767 186h1v1h-1z" fill="#0c0c78" fill-opacity="0.55"/><path d="M777 182h1v3h-1zM776 181h1v1h-1zM776 185h1v1h-1z" fill="#0c0c78"/><path d="M775 180h1v1h-1zM775 186h1v1h-1z" fill="#0c0c78" fill-opacity="0.55"/><path d="M785 182h1v3h-1zM784 181h1v1h-1zM784 185h1v1h-1z" fill="#0c0c78"/><path d="M783 180h1v1h-1zM783 186h1v1h-1z" fill="#0c0c78" fill-opacity="0.55"/><path d="M793 182h1v3h-1zM792 181h1v1h-1zM792 185h1v1h-1z" fill="#0c0c78"/><path d="M791 180h1v1h-1zM791 186h1v1h-1z" fill="#0c0c78" fill-opacity="0.55"/><path d="M801 182h1v3h-1zM800 181h1v1h-1zM800 185h1v1h-1z" fill="#0c0c78"/><path d="M799 180h1v1h-1zM799 186h1v1h-1z" fill="#0c0c78" fill-opacity="0.55"/><path d="M809 182h1v3h-1zM808 181h1v1h-1zM808 185h1v1h-1z" fill="#0c0c78"/><path d="M807 180h1v1h-1zM807 186h1v1h-1z" fill="#0c0c78" fill-opacity="0.55"/><path d="M817 182h1v3h-1zM816 181h1v1h-1zM816 185h1v1h-1z" fill="#0c0c78"/><path d="M815 180h1v1h-1zM815 186h1v1h-1z" fill="#0c0c78" fill-opacity="0.55"/><path d="M825 182h1v3h-1zM824 181h1v1h-1zM824 185h1v1h-1z" fill="#0c0c78"/><path d="M823 180h1v1h-1zM823 186h1v1h-1z" fill="#0c0c78" fill-opacity="0.55"/><path d="M833 182h1v3h-1zM832 181h1v1h-1zM832 185h1v1h-1z" fill="#0c0c78"/><path d="M831 180h1v1h-1zM831 186h1v1h-1z" fill="#0c0c78" fill-opacity="0.55"/><path d="M841 182h1v3h-1zM840 181h1v1h-1zM840 185h1v1h-1z" fill="#0c0c78"/><path d="M839 180h1v1h-1zM839 186h1v1h-1z" fill="#0c0c78" fill-opacity="0.55"/><path d="M849 182h1v3h-1zM848 181h1v1h-1zM848 185h1v1h-1z" fill="#0c0c78"/><path d="M847 180h1v1h-1zM847 186h1v1h-1z" fill="#0c0c78" fill-opacity="0.55"/><path d="M857 182h1v3h-1zM856 181h1v1h-1zM856 185h1v1h-1z" fill="#0c0c78"/><path d="M855 180h1v1h-1zM855 186h1v1h-1z" fill="#0c0c78" fill-opacity="0.55"/><path d="M865 182h1v3h-1zM864 181h1v1h-1zM864 185h1v1h-1z" fill="#0c0c78"/><path d="M863 180h1v1h-1zM863 186h1v1h-1z" fill="#0c0c78" fill-opacity="0.55"/><path d="M873 182h1v3h-1zM872 181h1v1h-1zM872 185h1v1h-1z" fill="#0c0c78"/><path d="M871 180h1v1h-1zM871 186h1v1h-1z" fill="#0c0c78" fill-opacity="0.55"/><path d="M881 182h1v3h-1zM880 181h1v1h-1zM880 185h1v1h-1z" fill="#0c0c78"/><path d="M879 180h1v1h-1zM879 186h1v1h-1z" fill="#0c0c78" fill-opacity="0.55"/><path d="M889 182h1v3h-1zM888 181h1v1h-1zM888 185h1v1h-1z" fill="#0c0c78"/><path d="M887 180h1v1h-1zM887 186h1v1h-1z" fill="#0c0c78" fill-opacity="0.55"/><path d="M897 182h1v3h-1zM896 181h1v1h-1zM896 185h1v1h-1z" fill="#0c0c78"/><path d="M895 180h1v1h-1zM895 186h1v1h-1z" fill="#0c0c78" fill-opacity="0.55"/><path d="M905 182h1v3h-1zM904 181h1v1h-1zM904 185h1v1h-1z" fill="#0c0c78"/><path d="M903 180h1v1h-1zM903 186h1v1h-1z" fill="#0c0c78" fill-opacity="0.55"/><path d="M913 182h1v3h-1zM912 181h1v1h-1zM912 185h1v1h-1z" fill="#0c0c78"/><path d="M911 180h1v1h-1zM911 186h1v1h-1z" fill="#0c0c78" fill-opacity="0.55"/><path d="M921 182h1v3h-1zM920 181h1v1h-1zM920 185h1v1h-1z" fill="#0c0c78"/><path d="M919 180h1v1h-1zM919 186h1v1h-1z" fill="#0c0c78" fill-opacity="0.55"/><path d="M929 182h1v3h-1zM928 181h1v1h-1zM928 185h1v1h-1z" fill="#0c0c78"/><path d="M927 180h1v1h-1zM927 186h1v1h-1z" fill="#0c0c78" fill-opacity="0.55"/><path d="M937 182h1v3h-1zM936 181h1v1h-1zM936 185h1v1h-1z" fill="#0c0c78"/><path d="M935 180h1v1h-1zM935 186h1v1h-1z" fill="#0c0c78" fill-opacity="0.55"/><path d="M945 182h1v3h-1zM944 181h1v1h-1zM944 185h1v1h-1z" fill="#0c0c78"/><path d="M943 180h1v1h-1zM943 186h1v1h-1z" fill="#0c0c78" fill-opacity="0.55"/>
<rect x="157" y="214" width="792" height="1" fill="#0c0c78"/>
<rect x="156" y="285" width="793" height="15" fill="#bebebe"/>
</g>
<g shape-rendering="crispEdges">
<rect x="155" y="348" width="379" height="58" fill="#fff"/>
<rect x="155" y="348" width="378" height="1" fill="#eeeeee"/><rect x="533" y="348" width="1" height="58" fill="#eeeeee"/><rect x="155" y="405" width="379" height="1" fill="#eeeeee"/>
<rect x="156" y="349" width="5" height="56" fill="#FFA54F"/>
<rect x="163" y="348" width="5" height="57" fill="#EE9A00"/>
<rect x="170" y="379" width="5" height="26" fill="#8FBC8F"/>
<rect x="177" y="364" width="5" height="41" fill="#8B1C62"/>
<rect x="184" y="362" width="5" height="43" fill="#EE6A50"/>
<rect x="191" y="370" width="5" height="35" fill="#FF0000"/>
<rect x="198" y="366" width="5" height="39" fill="#CDB79E"/>
<rect x="205" y="374" width="5" height="31" fill="#EEEE00"/>
<rect x="212" y="372" width="5" height="33" fill="#EEEE00"/>
<rect x="219" y="375" width="5" height="30" fill="#EEEE00"/>
<rect x="226" y="348" width="5" height="57" fill="#EEEE00"/>
<rect x="233" y="348" width="5" height="57" fill="#EEEE00"/>
<rect x="240" y="369" width="5" height="36" fill="#EEEE00"/>
<rect x="247" y="370" width="5" height="35" fill="#EEEE00"/>
<rect x="254" y="373" width="5" height="32" fill="#EEEE00"/>
<rect x="261" y="368" width="5" height="37" fill="#EEEE00"/>
<rect x="268" y="373" width="5" height="32" fill="#EEEE00"/>
<rect x="275" y="377" width="5" height="28" fill="#EEEE00"/>
<rect x="282" y="362" width="5" height="43" fill="#EEEE00"/>
<rect x="289" y="370" width="5" height="35" fill="#EEEE00"/>
<rect x="296" y="352" width="5" height="53" fill="#00CDCD"/>
<rect x="303" y="403" width="5" height="2" fill="#EE82EE"/>
<rect x="310" y="353" width="5" height="52" fill="#9AC0CD"/>
<rect x="317" y="365" width="5" height="40" fill="#EED5D2"/>
<rect x="324" y="369" width="5" height="36" fill="#EED5D2"/>
<rect x="331" y="371" width="5" height="34" fill="#CDB79E"/>
<rect x="338" y="378" width="5" height="27" fill="#EECFA1"/>
<rect x="345" y="363" width="5" height="42" fill="#8B7355"/>
<rect x="352" y="361" width="5" height="44" fill="#8B7355"/>
<rect x="359" y="359" width="5" height="46" fill="#CDAA7D"/>
<rect x="366" y="361" width="5" height="44" fill="#EED5D2"/>
<rect x="373" y="355" width="5" height="50" fill="#B452CD"/>
<rect x="380" y="360" width="5" height="45" fill="#7A378B"/>
<rect x="387" y="373" width="5" height="32" fill="#CDB79E"/>
<rect x="394" y="381" width="5" height="24" fill="#CDB79E"/>
<rect x="401" y="354" width="5" height="51" fill="#CDB79E"/>
<rect x="408" y="361" width="5" height="44" fill="#9ACD32"/>
<rect x="415" y="382" width="5" height="23" fill="#CDB79E"/>
<rect x="422" y="364" width="5" height="41" fill="#7A67EE"/>
<rect x="429" y="353" width="5" height="52" fill="#FFD700"/>
<rect x="436" y="386" width="5" height="19" fill="#FFB6C1"/>
<rect x="443" y="395" width="5" height="10" fill="#CD9B1D"/>
<rect x="450" y="376" width="5" height="29" fill="#B4EEB4"/>
<rect x="457" y="374" width="5" height="31" fill="#D9D9D9"/>
<rect x="464" y="377" width="5" height="28" fill="#3A5FCD"/>
<rect x="471" y="374" width="5" height="31" fill="#1E90FF"/>
<rect x="478" y="377" width="5" height="28" fill="#CDB79E"/>
<rect x="485" y="374" width="5" height="31" fill="#CDB79E"/>
<rect x="492" y="387" width="5" height="18" fill="#FFD39B"/>
<rect x="499" y="388" width="5" height="17" fill="#A6A6A6"/>
<rect x="506" y="370" width="5" height="35" fill="#008B45"/>
<rect x="513" y="365" width="5" height="40" fill="#EED5D2"/>
<rect x="520" y="363" width="5" height="42" fill="#EED5D2"/>
<rect x="527" y="390" width="5" height="15" fill="#FF00FF"/>
<rect x="156" y="406" width="793" height="2" fill="#0c0c78"/>
<rect x="156" y="454" width="793" height="1" fill="#6e1232"/>
</g>
<polyline points="211.5,499.6 227.5,497.4 235.5,497.4 252,499.6" fill="none" stroke="#ff0000" stroke-width="1.3" stroke-linejoin="round"/>
<g shape-rendering="crispEdges">
<rect x="213" y="500" width="10" height="1" fill="#5a5aff"/><rect x="223" y="500" width="23" height="1" fill="#c8c8ff"/><rect x="246" y="500" width="10" height="1" fill="#5a5aff"/>
<rect x="529" y="497" width="42" height="1" fill="url(#lr)"/>
<rect x="687" y="492" width="38" height="1" fill="#99ff99"/><rect x="703" y="492" width="6" height="4" fill="#00ff00"/>
<rect x="846" y="492" width="38" height="1" fill="#99ff99"/><rect x="862" y="492" width="6" height="4" fill="#00ff00"/>
<rect x="145" y="469" width="7" height="1" fill="#3c3c8c"/><rect x="145" y="519" width="7" height="1" fill="#8c3c3c"/>
<rect x="156" y="687" width="793" height="15" fill="#000"/>
</g>
<g>
<text x="56.29" y="13" font-size="14" fill="#000" textLength="96.04" lengthAdjust="spacingAndGlyphs">Window Position</text>
<text x="118.49" y="29.4" font-size="14" fill="#000" textLength="33.64" lengthAdjust="spacingAndGlyphs">Scale</text>
<text x="122.36" y="47" font-size="14" fill="#000" textLength="30.40" lengthAdjust="spacingAndGlyphs">chr5:</text>
<text x="131.63" y="63" font-size="14" fill="#000" textLength="20.05" lengthAdjust="spacingAndGlyphs">---&gt;</text>
<text x="37.83" y="92" font-size="14" fill="#006400" textLength="114.37" lengthAdjust="spacingAndGlyphs">ENSG00000248647</text>
<text x="37.83" y="108" font-size="14" fill="#006400" textLength="114.37" lengthAdjust="spacingAndGlyphs">ENSG00000248647</text>
<text x="105.16" y="124" font-size="14" fill="#0c0c78" textLength="47.21" lengthAdjust="spacingAndGlyphs">ABLIM3</text>
<text x="105.16" y="140" font-size="14" fill="#0c0c78" textLength="47.21" lengthAdjust="spacingAndGlyphs">ABLIM3</text>
<text x="105.16" y="156" font-size="14" fill="#0c0c78" textLength="47.21" lengthAdjust="spacingAndGlyphs">ABLIM3</text>
<text x="105.16" y="172" font-size="14" fill="#1c78b8" textLength="47.21" lengthAdjust="spacingAndGlyphs">ABLIM3</text>
<text x="105.16" y="188" font-size="14" fill="#0c0c78" textLength="47.21" lengthAdjust="spacingAndGlyphs">ABLIM3</text>
<text x="59.71" y="219" font-size="14" fill="#0c0c78" textLength="92.76" lengthAdjust="spacingAndGlyphs">RefSeq Curated</text>
<text x="86.42" y="250" font-size="14" fill="#000" textLength="65.65" lengthAdjust="spacingAndGlyphs">Sequences</text>
<text x="117.48" y="266" font-size="14" fill="#000" textLength="34.80" lengthAdjust="spacingAndGlyphs">SNPs</text>
<text x="73.74" y="297" font-size="14" fill="#006400" textLength="78.29" lengthAdjust="spacingAndGlyphs">OMIM Genes</text>
<text x="25.90" y="328" font-size="14" fill="#000" textLength="126.31" lengthAdjust="spacingAndGlyphs">Common dbSNP(155)</text>
<text x="104.86" y="384" font-size="14" fill="#000" textLength="47.41" lengthAdjust="spacingAndGlyphs">ABLIM3</text>
<text x="13.12" y="437" font-size="14" fill="#000" textLength="104.55" lengthAdjust="spacingAndGlyphs">Layered H3K27Ac</text>
<text x="115.58" y="468" font-size="13" fill="#3c3c8c" textLength="26.05" lengthAdjust="spacingAndGlyphs">4.88</text>
<text x="12.49" y="493" font-size="14" fill="#3c3c8c" textLength="87.15" lengthAdjust="spacingAndGlyphs">100 Vert. Cons</text>
<text x="118.57" y="518" font-size="13" fill="#8c3c3c" textLength="22.91" lengthAdjust="spacingAndGlyphs">-4.5</text>
<text x="120.90" y="549" font-size="14" fill="#e08c1e" textLength="31.19" lengthAdjust="spacingAndGlyphs">Gaps</text>
<text x="110.50" y="564" font-size="14" fill="#0c0c78" textLength="42.16" lengthAdjust="spacingAndGlyphs">Human</text>
<text x="107.90" y="579" font-size="14" fill="#0c0c78" textLength="44.18" lengthAdjust="spacingAndGlyphs">Rhesus</text>
<text x="112.59" y="594" font-size="14" fill="#006400" textLength="39.63" lengthAdjust="spacingAndGlyphs">Mouse</text>
<text x="129.35" y="609" font-size="14" fill="#0c0c78" textLength="23.02" lengthAdjust="spacingAndGlyphs">Dog</text>
<text x="101.02" y="624" font-size="14" fill="#006400" textLength="50.84" lengthAdjust="spacingAndGlyphs">Elephant</text>
<text x="104.58" y="639" font-size="14" fill="#006400" textLength="47.95" lengthAdjust="spacingAndGlyphs">Chicken</text>
<text x="83.66" y="654" font-size="14" fill="#0c0c78" textLength="68.58" lengthAdjust="spacingAndGlyphs">X_tropicalis</text>
<text x="97.58" y="669" font-size="14" fill="#006400" textLength="54.95" lengthAdjust="spacingAndGlyphs">Zebrafish</text>
<text x="67.71" y="699" font-size="14" fill="#000" textLength="84.02" lengthAdjust="spacingAndGlyphs">RepeatMasker</text>
<text x="341.72" y="12" font-size="14" fill="#000" textLength="196.65" lengthAdjust="spacingAndGlyphs">Human Feb. 2009 (GRCh37/hg19)</text>
<text x="549.72" y="12" font-size="13" fill="#000" textLength="212.19" lengthAdjust="spacingAndGlyphs">chr5:148,564,214-148,564,218 (5 bp)</text>
<text x="344.82" y="29" font-size="13" fill="#000" textLength="45.69" lengthAdjust="spacingAndGlyphs">2 bases</text>
<text x="721.03" y="28.5" font-size="13" fill="#000" textLength="27.95" lengthAdjust="spacingAndGlyphs">hg19</text>
<text x="241.01" y="47" font-size="13" fill="#000" textLength="71.25" lengthAdjust="spacingAndGlyphs">148,564,214</text>
<text x="400.12" y="47" font-size="13" fill="#000" textLength="70.87" lengthAdjust="spacingAndGlyphs">148,564,215</text>
<text x="558.12" y="47" font-size="13" fill="#000" textLength="70.60" lengthAdjust="spacingAndGlyphs">148,564,216</text>
<text x="716.92" y="47" font-size="13" fill="#000" textLength="71.21" lengthAdjust="spacingAndGlyphs">148,564,217</text>
<text x="431.80" y="78" font-size="14" fill="#000" textLength="240.16" lengthAdjust="spacingAndGlyphs">GENCODE V49lift37 (2 items filtered out)</text>
<text x="490.85" y="204" font-size="11.5" fill="#000" textLength="123.64" lengthAdjust="spacingAndGlyphs">RefSeq genes from NCBI</text>
<text x="444.96" y="234.7" font-size="11.5" fill="#000" textLength="214.67" lengthAdjust="spacingAndGlyphs">Publications: Sequences in Scientific Articles</text>
<text x="367.44" y="283" font-size="14" fill="#006400" textLength="370.32" lengthAdjust="spacingAndGlyphs">OMIM Gene Phenotypes - Dark Green Can Be Disease-causing</text>
<text x="435.49" y="312.7" font-size="11.5" fill="#000" textLength="232.92" lengthAdjust="spacingAndGlyphs">Short Genetic Variants from dbSNP release 155</text>
<text x="265.80" y="345" font-size="14" fill="#000" textLength="572.03" lengthAdjust="spacingAndGlyphs">Gene Expression in 54 tissues from GTEx RNA-seq of 17382 samples, 948 donors (V8, Aug 2019)</text>
<text x="280.70" y="423" font-size="14" fill="#000" textLength="542.05" lengthAdjust="spacingAndGlyphs">H3K27Ac Mark (Often Found Near Active Regulatory Elements) on 7 cell lines from ENCODE</text>
<text x="405.50" y="469" font-size="14" fill="#3c3c8c" textLength="292.86" lengthAdjust="spacingAndGlyphs">100 vertebrates Basewise Conservation by PhyloP</text>
<text x="445.09" y="535" font-size="14" fill="#0c0c78" textLength="214.32" lengthAdjust="spacingAndGlyphs">Multiz Alignments of 100 Vertebrates</text>
<text x="441.00" y="684.5" font-size="14" fill="#000" textLength="223.13" lengthAdjust="spacingAndGlyphs">Repeating Elements by RepeatMasker</text>
<text x="233.2" y="61" font-size="14" fill="#000" text-anchor="middle">A</text>
<text x="391.8" y="61" font-size="14" fill="#000" text-anchor="middle">C</text>
<text x="550.4" y="61" font-size="14" fill="#000" text-anchor="middle">A</text>
<text x="709.1" y="61" font-size="14" fill="#000" text-anchor="middle">T</text>
<text x="868.0" y="61" font-size="14" fill="#000" text-anchor="middle">T</text>
<text x="233.2" y="564" font-size="14" fill="#0c0c78" text-anchor="middle">A</text>
<text x="391.8" y="564" font-size="14" fill="#0c0c78" text-anchor="middle">C</text>
<text x="550.4" y="564" font-size="14" fill="#0c0c78" text-anchor="middle">A</text>
<text x="709.1" y="564" font-size="14" fill="#0c0c78" text-anchor="middle">T</text>
<text x="868.0" y="564" font-size="14" fill="#0c0c78" text-anchor="middle">T</text>
<text x="233.2" y="579" font-size="14" fill="#0c0c78" text-anchor="middle">A</text>
<text x="391.8" y="579" font-size="14" fill="#0c0c78" text-anchor="middle">C</text>
<text x="550.4" y="579" font-size="14" fill="#0c0c78" text-anchor="middle">A</text>
<text x="709.1" y="579" font-size="14" fill="#0c0c78" text-anchor="middle">T</text>
<text x="868.0" y="579" font-size="14" fill="#0c0c78" text-anchor="middle">T</text>
<text x="233.2" y="594" font-size="14" fill="#0c0c78" text-anchor="middle">A</text>
<text x="391.8" y="594" font-size="14" fill="#8c8cb4" text-anchor="middle">T</text>
<text x="550.4" y="594" font-size="14" fill="#8c8cb4" text-anchor="middle">G</text>
<text x="709.1" y="594" font-size="14" fill="#0c0c78" text-anchor="middle">T</text>
<text x="868.0" y="594" font-size="14" fill="#0c0c78" text-anchor="middle">T</text>
<text x="233.2" y="609" font-size="14" fill="#8c8cb4" text-anchor="middle">C</text>
<text x="391.8" y="609" font-size="14" fill="#0c0c78" text-anchor="middle">C</text>
<text x="550.4" y="609" font-size="14" fill="#0c0c78" text-anchor="middle">A</text>
<text x="709.1" y="609" font-size="14" fill="#0c0c78" text-anchor="middle">T</text>
<text x="868.0" y="609" font-size="14" fill="#0c0c78" text-anchor="middle">T</text>
<rect x="231" y="620" width="4" height="1" fill="#8c8cb4" shape-rendering="crispEdges"/>
<text x="391.8" y="624" font-size="14" fill="#0c0c78" text-anchor="middle">C</text>
<text x="550.4" y="624" font-size="14" fill="#0c0c78" text-anchor="middle">A</text>
<text x="709.1" y="624" font-size="14" fill="#0c0c78" text-anchor="middle">T</text>
<text x="868.0" y="624" font-size="14" fill="#0c0c78" text-anchor="middle">T</text>
<path d="M230 634h6v1h-6zM230 637h6v1h-6z" fill="#8080b4" shape-rendering="crispEdges"/>
<path d="M389 634h6v1h-6zM389 637h6v1h-6z" fill="#8080b4" shape-rendering="crispEdges"/>
<path d="M547 634h6v1h-6zM547 637h6v1h-6z" fill="#8080b4" shape-rendering="crispEdges"/>
<path d="M706 634h6v1h-6zM706 637h6v1h-6z" fill="#8080b4" shape-rendering="crispEdges"/>
<path d="M865 634h6v1h-6zM865 637h6v1h-6z" fill="#8080b4" shape-rendering="crispEdges"/>
<path d="M230 649h6v1h-6zM230 652h6v1h-6z" fill="#8080b4" shape-rendering="crispEdges"/>
<path d="M389 649h6v1h-6zM389 652h6v1h-6z" fill="#8080b4" shape-rendering="crispEdges"/>
<path d="M547 649h6v1h-6zM547 652h6v1h-6z" fill="#8080b4" shape-rendering="crispEdges"/>
<path d="M706 649h6v1h-6zM706 652h6v1h-6z" fill="#8080b4" shape-rendering="crispEdges"/>
<path d="M865 649h6v1h-6zM865 652h6v1h-6z" fill="#8080b4" shape-rendering="crispEdges"/>
<path d="M230 664h6v1h-6zM230 667h6v1h-6z" fill="#8080b4" shape-rendering="crispEdges"/>
<path d="M389 664h6v1h-6zM389 667h6v1h-6z" fill="#8080b4" shape-rendering="crispEdges"/>
<path d="M547 664h6v1h-6zM547 667h6v1h-6z" fill="#8080b4" shape-rendering="crispEdges"/>
<path d="M706 664h6v1h-6zM706 667h6v1h-6z" fill="#8080b4" shape-rendering="crispEdges"/>
<path d="M865 664h6v1h-6zM865 667h6v1h-6z" fill="#8080b4" shape-rendering="crispEdges"/>
</g>
<rect x="156" y="687" width="793" height="15" fill="#000" shape-rendering="crispEdges"/>
</svg></body></html>
